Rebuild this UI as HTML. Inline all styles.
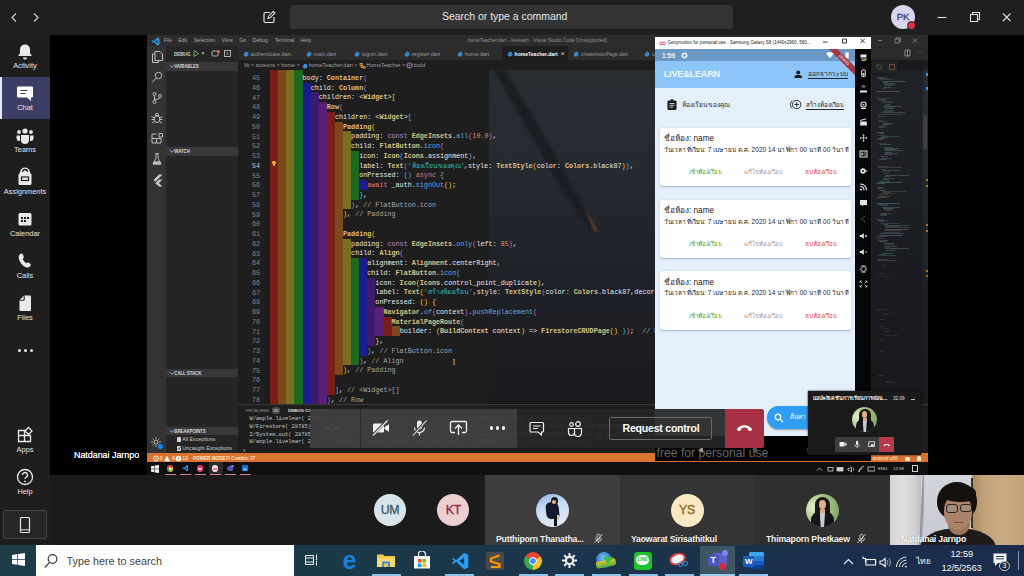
<!DOCTYPE html>
<html lang="th"><head><meta charset="utf-8"><title>Microsoft Teams</title><style>
*{margin:0;padding:0;box-sizing:border-box}
html,body{width:1024px;height:576px;overflow:hidden;background:#000}
body{font-family:"Liberation Sans","Noto Sans CJK JP",sans-serif;position:relative;color:#fff}
div,svg,span.a{position:absolute}
.m{font-family:"Liberation Mono","DejaVu Sans Mono",monospace}
.b{font-weight:bold}
.t{display:inline-block;white-space:nowrap;clip-path:inset(-6px 0 -6px 0)}
</style></head><body>
<div style="left:0px;top:0px;width:1024px;height:35px;background:#1f1f1f;"></div>
<div style="left:290px;top:5px;width:443px;height:24px;background:#333333;border-radius:3px;"></div>
<div style="left:442px;top:12.2px;font-size:10.45px;color:#e6e6e6;white-space:nowrap;line-height:1;">Search or type a command</div>
<svg style="left:8px;top:11px" width="36" height="14" viewBox="0 0 36 14"><path d="M8 2.500 L4 6.500 L8 10.500 M26 2.500 L30 6.500 L26 10.500" fill="none" stroke="#d0d0d0" stroke-width="1.2"/></svg>
<svg style="left:262px;top:10px" width="14" height="14" viewBox="0 0 14 14"><path d="M8 2.5H3.5a1.5 1.5 0 0 0-1.5 1.5v7a1.5 1.5 0 0 0 1.5 1.5h7a1.5 1.5 0 0 0 1.5-1.5V7" fill="none" stroke="#e0e0e0" stroke-width="1.2"/><path d="M6 8.5 L6.6 6.2 L11.4 1.4 L13 3 L8.2 7.8 Z" fill="none" stroke="#e0e0e0" stroke-width="1.1"/></svg>
<div style="left:891px;top:5px;width:24px;height:24px;background:#d9d5ef;border-radius:50%;"></div>
<div style="left:896.8px;top:12.3px;font-size:9.6px;color:#3b3a6e;white-space:nowrap;line-height:1;letter-spacing:-0.1px;-webkit-text-stroke:.3px #3b3a6e">PK</div>
<div style="left:906.5px;top:20.5px;width:9px;height:9px;background:#d8354a;border-radius:50%;border:1px solid #1f1f1f;"></div>
<svg style="left:930px;top:8px" width="90" height="20" viewBox="0 0 90 20" fill="none" stroke="#ddd" stroke-width="1.100"><path d="M7.500 9.500h9"/><path d="M40.500 6.500h7v7h-7zM42.500 6.500v-2h7v7h-2"/><path d="M73 5.500l7.500 7.500M80.500 5.500 73 13"/></svg>
<div style="left:0px;top:35px;width:50px;height:511px;background:#1f1e1e;"></div>
<div style="left:0px;top:77px;width:50px;height:42px;background:#3d3e66;"></div>
<div style="left:0px;top:77px;width:2px;height:42px;background:#e8e8f8;"></div>
<svg style="left:15px;top:41.2px" width="20" height="20" viewBox="0 0 20 20"><g transform="translate(0,1)"><path d="M10 2.5c-3 0-5 2.2-5 5v3.5l-1.8 3h13.6l-1.800-3V7.500c0-2.800-2-5-5-5z" fill="#e9e9e9"/><path d="M8 15.500a2 2 0 0 0 4 0z" fill="#e9e9e9"/></g></svg>
<div style="left:0;top:62.2px;width:50px;text-align:center;font-size:7.4px;color:#e4e4e4;line-height:1">Activity</div>
<svg style="left:15px;top:83.2px" width="20" height="20" viewBox="0 0 20 20"><path d="M3 3.500h14a1 1 0 0 1 1 1v9a1 1 0 0 1-1 1h-1v3.500l-4-3.500H3a1 1 0 0 1-1-1v-9a1 1 0 0 1 1-1z" fill="#fff"/><path d="M5.500 7.500h7M5.500 10.500h5" stroke="#3d3e66" stroke-width="1.2"/></svg>
<div style="left:0;top:104.2px;width:50px;text-align:center;font-size:7.4px;color:#e4e4e4;line-height:1">Chat</div>
<svg style="left:15px;top:125.2px" width="20" height="20" viewBox="0 0 20 20"><circle cx="10" cy="6" r="2.600" fill="#e9e9e9"/><circle cx="4" cy="7" r="1.900" fill="#e9e9e9"/><circle cx="16" cy="7" r="1.900" fill="#e9e9e9"/><path d="M6 10h8v5a4 4 0 0 1-8 0z" fill="#e9e9e9"/><path d="M1.500 10.500h3.500v5.500a3 3 0 0 1-3.500-2.500zM18.500 10.500h-3.500v5.500a3 3 0 0 0 3.500-2.500z" fill="#e9e9e9"/></svg>
<div style="left:0;top:146.2px;width:50px;text-align:center;font-size:7.4px;color:#e4e4e4;line-height:1">Teams</div>
<svg style="left:15px;top:167.2px" width="20" height="20" viewBox="0 0 20 20"><path d="M5 5.500a5 5 0 0 1 10 0l1.500 2v9a1.500 1.500 0 0 1-1.500 1.500H5a1.500 1.500 0 0 1-1.500-1.500v-9z" fill="#e9e9e9"/><path d="M7.500 5a2.500 2.500 0 0 1 5 0" stroke="#1f1e1e" fill="none" stroke-width="1.300"/><rect x="6.500" y="10" width="7" height="3.500" fill="none" stroke="#1f1e1e" stroke-width="1.200"/></svg>
<div style="left:0;top:188.2px;width:50px;text-align:center;font-size:7.4px;color:#e4e4e4;line-height:1">Assignments</div>
<svg style="left:15px;top:209.2px" width="20" height="20" viewBox="0 0 20 20"><rect x="3.500" y="4" width="13" height="12.500" rx="1.500" fill="#e9e9e9"/><path d="M6 8h2v2H6zM9 8h2v2H9zM12 8h2v2h-2zM6 11h2v2H6zM9 11h2v2H9z" fill="#1f1e1e"/></svg>
<div style="left:0;top:230.2px;width:50px;text-align:center;font-size:7.4px;color:#e4e4e4;line-height:1">Calendar</div>
<svg style="left:15px;top:251.2px" width="20" height="20" viewBox="0 0 20 20"><path d="M6.500 2.500c1 0 1.500 1 2 2.500s.2 2-.8 2.800c.5 1.500 2 3.500 3.500 4.500 1-.8 1.800-1 3-.2s2 1.500 1.500 2.500-2 2.400-4 1.900c-4-1-7.700-6-8-10-.2-2 1.300-4 2.800-4z" fill="#e9e9e9"/></svg>
<div style="left:0;top:272.2px;width:50px;text-align:center;font-size:7.4px;color:#e4e4e4;line-height:1">Calls</div>
<svg style="left:15px;top:293.2px" width="20" height="20" viewBox="0 0 20 20"><g transform="translate(20,0) scale(-1,1)"><path d="M5 2.500h6l4.500 4.500v10a1 1 0 0 1-1 1h-9.500a1 1 0 0 1-1-1v-13.500a1 1 0 0 1 1-1z" fill="#e9e9e9"/><path d="M10.800 2.500v4.700h4.700" fill="none" stroke="#1f1e1e" stroke-width="1"/></g></svg>
<div style="left:0;top:314.2px;width:50px;text-align:center;font-size:7.4px;color:#e4e4e4;line-height:1">Files</div>
<div style="left:17.5px;top:348.8px;width:3.2px;height:3.2px;background:#e6e6e6;border-radius:50%;"></div>
<div style="left:23.5px;top:348.8px;width:3.2px;height:3.2px;background:#e6e6e6;border-radius:50%;"></div>
<div style="left:29.5px;top:348.8px;width:3.2px;height:3.2px;background:#e6e6e6;border-radius:50%;"></div>
<svg style="left:15px;top:425.2px" width="20" height="20" viewBox="0 0 20 20"><path d="M3.500 5.500h6v11h-6zM9.500 10.500h6v6h-6M3.500 10.500h6" fill="none" stroke="#e9e9e9" stroke-width="1.300"/><path d="M13.500 2.500l3.500 3.500-3.500 3.500-3.500-3.500z" fill="none" stroke="#e9e9e9" stroke-width="1.300"/></svg>
<div style="left:0;top:446.2px;width:50px;text-align:center;font-size:7.4px;color:#e4e4e4;line-height:1">Apps</div>
<svg style="left:15px;top:467.2px" width="20" height="20" viewBox="0 0 20 20"><circle cx="10" cy="10" r="7.500" fill="none" stroke="#e9e9e9" stroke-width="1.300"/><path d="M7.500 8a2.500 2.500 0 1 1 3.500 2.300c-.7.400-1 .8-1 1.700" fill="none" stroke="#e9e9e9" stroke-width="1.300"/><circle cx="10" cy="14.300" r=".9" fill="#e9e9e9"/></svg>
<div style="left:0;top:488.2px;width:50px;text-align:center;font-size:7.4px;color:#e4e4e4;line-height:1">Help</div>
<div style="left:2.5px;top:509.5px;width:44.5px;height:29.5px;background:#262626;border:1px solid #444;border-radius:2px;"></div>
<svg style="left:19px;top:516px" width="12" height="18" viewBox="0 0 12 18"><rect x="1.500" y="1.500" width="9" height="15" rx="1" fill="none" stroke="#e6e6e6" stroke-width="1.200"/><path d="M1.500 13.800h9" stroke="#e6e6e6" stroke-width="1"/></svg>
<div style="left:74px;top:451.3px;font-size:8.9px;color:#f4f4f4;white-space:nowrap;line-height:1;text-shadow:0 0 .4px #fff;">Natdanai Jarnpo</div>
<div style="left:147px;top:35px;width:781px;height:440px;background:#1e1e1e;"></div>
<div style="left:488.6px;top:70px;width:439.4px;height:334px;background:linear-gradient(to bottom,#272d31 0%,#242a30 30%,#1f242b 55%,#1c1e23 80%,#1b1b1f 100%);"></div>
<svg style="left:488px;top:70px" width="170" height="200" viewBox="0 0 170 200"><defs><filter id="bl"><feGaussianBlur stdDeviation="1.1"/></filter></defs><path d="M6 0 L17 0 L60 72 L84 116 L108 160 L103 163 L72 116 L48 74 Z" fill="#1a1e22" filter="url(#bl)" opacity=".9"/><path d="M97 138 L110 161 L106 162 Z" fill="#a0522a" filter="url(#bl)" opacity=".55"/></svg>
<div style="left:147px;top:35px;width:781px;height:11px;background:#2c2c2d;"></div>
<svg style="left:151px;top:36.500px" width="9" height="9" viewBox="0 0 24 24"><path d="M17.500 1.500 7 11 3 8 1.500 9l3.500 3-3.500 3L3 16l4-3 10.500 9.500 5-2.500V4zM17.500 7v10L11 12z" fill="#2a9df4"/></svg>
<div style="left:163.8px;top:38.3px;font-size:5.2px;color:#a8a8a8;white-space:nowrap;line-height:1;">File</div>
<div style="left:178.3px;top:38.3px;font-size:5.2px;color:#a8a8a8;white-space:nowrap;line-height:1;">Edit</div>
<div style="left:193.9px;top:38.3px;font-size:5.2px;color:#a8a8a8;white-space:nowrap;line-height:1;">Selection</div>
<div style="left:221.5px;top:38.3px;font-size:5.2px;color:#a8a8a8;white-space:nowrap;line-height:1;">View</div>
<div style="left:239.2px;top:38.3px;font-size:5.2px;color:#a8a8a8;white-space:nowrap;line-height:1;">Go</div>
<div style="left:252.5px;top:38.3px;font-size:5.2px;color:#a8a8a8;white-space:nowrap;line-height:1;">Debug</div>
<div style="left:274.7px;top:38.3px;font-size:5.2px;color:#a8a8a8;white-space:nowrap;line-height:1;">Terminal</div>
<div style="left:300.5px;top:38.3px;font-size:5.2px;color:#a8a8a8;white-space:nowrap;line-height:1;">Help</div>
<div style="left:467.5px;top:39px;font-size:4.88px;color:#949494;white-space:nowrap;line-height:1;">homeTeacher.dart - livelearn - Visual Studio Code [Unsupported]</div>
<div style="left:147px;top:46px;width:19px;height:407px;background:#333333;"></div>
<svg style="left:150px;top:49.5px" width="14" height="14" viewBox="0 0 14 14" fill="none" stroke="#bdbdbd" stroke-width="1"><path d="M5 1.500h5l2.500 2.500v6.500H5zM5 4H2.500v8.500h6V10.500"/></svg>
<svg style="left:150px;top:70px" width="14" height="14" viewBox="0 0 14 14" fill="none" stroke="#bdbdbd" stroke-width="1"><circle cx="8.500" cy="5.500" r="3.200"/><path d="M6.300 8 2 12.500"/></svg>
<svg style="left:150px;top:90.5px" width="14" height="14" viewBox="0 0 14 14" fill="none" stroke="#bdbdbd" stroke-width="1"><circle cx="4.500" cy="3" r="1.500"/><circle cx="4.500" cy="11" r="1.500"/><circle cx="10" cy="5" r="1.500"/><path d="M4.500 4.500v5M10 6.500c0 2-5.500 1.500-5.500 3"/></svg>
<svg style="left:150px;top:111px" width="14" height="14" viewBox="0 0 14 14" fill="none" stroke="#bdbdbd" stroke-width="1"><ellipse cx="7" cy="8" rx="2.800" ry="3.600"/><circle cx="7" cy="3.800" r="1.500"/><path d="M1.500 5.500l2.800 1.500M12.500 5.500 9.700 7M1.500 8.500h2.700M12.500 8.500H9.800M2 12l2.500-1.500M12 12l-2.500-1.500"/></svg>
<svg style="left:150px;top:131.5px" width="14" height="14" viewBox="0 0 14 14" fill="none" stroke="#bdbdbd" stroke-width="1"><path d="M2 6.500h4.500V11M2 6.500V11h9V6.500H6.500M6.500 2H2v4.500M9 1.500h3.500V5H9z"/></svg>
<svg style="left:150px;top:152px" width="14" height="14" viewBox="0 0 14 14" fill="none" stroke="#bdbdbd" stroke-width="1"><path d="M5.500 1.500h3M6 1.500V6L3 12h8L8 6V1.500M4 10h6" /><path d="M4 10h6l1 2H3z" fill="#bdbdbd"/></svg>
<svg style="left:150px;top:173px" width="14" height="14" viewBox="0 0 14 14"><path d="M9 1.500 3.500 7 5.300 8.800 12.500 1.500zM9 6.500 5.300 10.200 9 13.500h3.500L8.800 10l3.700-3.500z" fill="#c8c8c8"/></svg>
<svg style="left:150px;top:436px" width="14" height="14" viewBox="0 0 14 14" fill="none" stroke="#bdbdbd" stroke-width="1"><circle cx="6" cy="6" r="2"/><path d="M6 1.200v1.600M6 9.200v1.600M1.200 6h1.600M9.200 6h1.600M2.600 2.600l1.100 1.100M8.300 8.300l1.100 1.100M2.600 9.400l1.100-1.100M8.300 3.700l1.100-1.100"/></svg>
<div style="left:157.5px;top:443.5px;width:5.5px;height:5.5px;background:#1583e8;border-radius:50%;"></div>
<div style="left:166px;top:46px;width:72px;height:407px;background:#252526;"></div>
<div style="left:174px;top:52.8px;font-size:4.7px;color:#cfcfcf;white-space:nowrap;line-height:1;font-weight:bold;letter-spacing:-.1px">DEBUG</div>
<svg style="left:192px;top:49px" width="44" height="9" viewBox="0 0 44 9"><path d="M2 1.500v6l4.500-3z" fill="none" stroke="#5fb760" stroke-width="1"/><path d="M9.500 3.500h3l-1.500 2z" fill="#ddd"/><rect x="20" y="2" width="6" height="5" rx="1" fill="none" stroke="#bbb" stroke-width=".9"/><circle cx="26.500" cy="2.500" r="1.500" fill="#e8703a"/><rect x="32.500" y="1.500" width="6" height="6" fill="none" stroke="#bbb" stroke-width=".9"/><path d="M34.500 3l1.500 1.500-1.500 1.500" fill="none" stroke="#bbb" stroke-width=".8"/></svg>
<div style="left:166px;top:62px;width:72px;height:8.5px;background:#38383a;"></div>
<svg style="left:168.500px;top:64px" width="6" height="5" viewBox="0 0 6 5"><path d="M1 1.200l2 2.200 2-2.200" fill="none" stroke="#c0c0c0" stroke-width=".8"/></svg>
<div style="left:174.3px;top:65.3px;font-size:4.45px;color:#d8d8d8;white-space:nowrap;line-height:1;font-weight:bold;letter-spacing:-.1px">VARIABLES</div>
<div style="left:166px;top:147px;width:72px;height:8.8px;background:#38383a;"></div>
<svg style="left:168.500px;top:149px" width="6" height="5" viewBox="0 0 6 5"><path d="M1 1.200l2 2.200 2-2.200" fill="none" stroke="#c0c0c0" stroke-width=".8"/></svg>
<div style="left:174.3px;top:150.3px;font-size:4.45px;color:#d8d8d8;white-space:nowrap;line-height:1;font-weight:bold;letter-spacing:-.1px">WATCH</div>
<div style="left:166px;top:368.5px;width:72px;height:8.5px;background:#38383a;"></div>
<svg style="left:168.500px;top:370.5px" width="6" height="5" viewBox="0 0 6 5"><path d="M1 1.200l2 2.200 2-2.200" fill="none" stroke="#c0c0c0" stroke-width=".8"/></svg>
<div style="left:174.3px;top:371.8px;font-size:4.45px;color:#d8d8d8;white-space:nowrap;line-height:1;font-weight:bold;letter-spacing:-.1px">CALL STACK</div>
<div style="left:166px;top:426.7px;width:72px;height:8.5px;background:#38383a;"></div>
<svg style="left:168.500px;top:428.7px" width="6" height="5" viewBox="0 0 6 5"><path d="M1 1.200l2 2.200 2-2.200" fill="none" stroke="#c0c0c0" stroke-width=".8"/></svg>
<div style="left:174.3px;top:430.0px;font-size:4.45px;color:#d8d8d8;white-space:nowrap;line-height:1;font-weight:bold;letter-spacing:-.1px">BREAKPOINTS</div>
<div style="left:176.5px;top:437px;width:4.5px;height:4.5px;background:#d0d0d0;border-radius:.5px;"></div>
<div style="left:182.3px;top:437px;font-size:5.25px;color:#cccccc;white-space:nowrap;line-height:1;">All Exceptions</div>
<div style="left:176.5px;top:446px;width:4.5px;height:4.5px;background:#d0d0d0;border-radius:.5px;"></div>
<svg style="left:176.500px;top:446px" width="4.500" height="4.500" viewBox="0 0 9 9"><path d="M1.500 4.500 3.800 7 7.500 2" fill="none" stroke="#222" stroke-width="1.600"/></svg>
<div style="left:182.3px;top:446px;font-size:5.25px;color:#cccccc;white-space:nowrap;line-height:1;">Uncaught Exceptions</div>
<div style="left:238px;top:46px;width:690px;height:14px;background:#2a2a2b;"></div>
<div style="left:238px;top:46px;width:62.5px;height:14px;background:#2b2b2c;"></div>
<svg style="left:242.8px;top:50.6px" width="6" height="6" viewBox="0 0 6 6"><path d="M.6 3.600 2.200 1.200 3.800.500 5.500 2.800 5.200 4.500 3.600 5.600H1.600z" fill="#3d94d6"/><path d="M2.600 2.200 4.600 4.400" stroke="#1e3a52" stroke-width=".6"/></svg>
<div style="left:250.6px;top:51.6px;font-size:5.4px;color:#9a9a9a;white-space:nowrap;line-height:1;">authenticate.dart</div>
<div style="left:301px;top:46px;width:48.0px;height:14px;background:#2b2b2c;"></div>
<svg style="left:305.8px;top:50.6px" width="6" height="6" viewBox="0 0 6 6"><path d="M.6 3.600 2.200 1.200 3.800.500 5.500 2.800 5.200 4.500 3.600 5.600H1.600z" fill="#3d94d6"/><path d="M2.600 2.200 4.600 4.400" stroke="#1e3a52" stroke-width=".6"/></svg>
<div style="left:313.6px;top:51.6px;font-size:5.4px;color:#9a9a9a;white-space:nowrap;line-height:1;">main.dart</div>
<div style="left:349.5px;top:46px;width:49.0px;height:14px;background:#2b2b2c;"></div>
<svg style="left:354.3px;top:50.6px" width="6" height="6" viewBox="0 0 6 6"><path d="M.6 3.600 2.200 1.200 3.800.500 5.500 2.800 5.200 4.500 3.600 5.600H1.600z" fill="#3d94d6"/><path d="M2.600 2.200 4.600 4.400" stroke="#1e3a52" stroke-width=".6"/></svg>
<div style="left:362.1px;top:51.6px;font-size:5.4px;color:#9a9a9a;white-space:nowrap;line-height:1;">signin.dart</div>
<div style="left:399px;top:46px;width:53.0px;height:14px;background:#2b2b2c;"></div>
<svg style="left:403.8px;top:50.6px" width="6" height="6" viewBox="0 0 6 6"><path d="M.6 3.600 2.200 1.200 3.800.500 5.500 2.800 5.200 4.500 3.600 5.600H1.600z" fill="#3d94d6"/><path d="M2.600 2.200 4.600 4.400" stroke="#1e3a52" stroke-width=".6"/></svg>
<div style="left:411.6px;top:51.6px;font-size:5.4px;color:#9a9a9a;white-space:nowrap;line-height:1;">register.dart</div>
<div style="left:452.5px;top:46px;width:49.0px;height:14px;background:#2b2b2c;"></div>
<svg style="left:457.3px;top:50.6px" width="6" height="6" viewBox="0 0 6 6"><path d="M.6 3.600 2.200 1.200 3.800.500 5.500 2.800 5.200 4.500 3.600 5.600H1.600z" fill="#3d94d6"/><path d="M2.600 2.200 4.600 4.400" stroke="#1e3a52" stroke-width=".6"/></svg>
<div style="left:465.1px;top:51.6px;font-size:5.4px;color:#9a9a9a;white-space:nowrap;line-height:1;">home.dart</div>
<div style="left:502px;top:46px;width:65.5px;height:14px;background:#1e1e1e;"></div>
<svg style="left:506.8px;top:50.6px" width="6" height="6" viewBox="0 0 6 6"><path d="M.6 3.600 2.200 1.200 3.800.500 5.500 2.800 5.200 4.500 3.600 5.600H1.600z" fill="#3d94d6"/><path d="M2.600 2.200 4.600 4.400" stroke="#1e3a52" stroke-width=".6"/></svg>
<div style="left:514.6px;top:51.6px;font-size:5.05px;color:#ffffff;white-space:nowrap;line-height:1;font-weight:bold;">homeTeacher.dart</div>
<div style="left:560.5px;top:49.8px;font-size:7.5px;color:#c8c8c8;white-space:nowrap;line-height:1;">×</div>
<div style="left:568.5px;top:46px;width:70.5px;height:14px;background:#2b2b2c;"></div>
<svg style="left:573.3px;top:50.6px" width="6" height="6" viewBox="0 0 6 6"><path d="M.6 3.600 2.200 1.200 3.800.500 5.500 2.800 5.200 4.500 3.600 5.600H1.600z" fill="#3d94d6"/><path d="M2.600 2.200 4.600 4.400" stroke="#1e3a52" stroke-width=".6"/></svg>
<div style="left:581.1px;top:51.6px;font-size:4.98px;color:#9a9a9a;white-space:nowrap;line-height:1;">createroomPage.dart</div>
<div style="left:639.5px;top:46px;width:59.5px;height:14px;background:#2b2b2c;"></div>
<svg style="left:644.3px;top:50.6px" width="6" height="6" viewBox="0 0 6 6"><path d="M.6 3.600 2.200 1.200 3.800.500 5.500 2.800 5.200 4.500 3.600 5.600H1.600z" fill="#3d94d6"/><path d="M2.600 2.200 4.600 4.400" stroke="#1e3a52" stroke-width=".6"/></svg>
<div style="left:652.1px;top:51.6px;font-size:5.4px;color:#9a9a9a;white-space:nowrap;line-height:1;">u</div>
<div style="left:238px;top:60px;width:417px;height:10px;background:#1e1e1e;"></div>
<div style="left:244px;top:62.5px;font-size:5.5px;color:#a0a0a0;white-space:nowrap;line-height:1;">lib &gt; screens &gt; home &gt;</div>
<svg style="left:301.500px;top:62.500px" width="6" height="6" viewBox="0 0 6 6"><path d="M.6 3.600 2.200 1.200 3.800.500 5.500 2.800 5.200 4.500 3.600 5.600H1.600z" fill="#3d94d6"/></svg>
<div style="left:308.8px;top:62.5px;font-size:5.5px;color:#a0a0a0;white-space:nowrap;line-height:1;">homeTeacher.dart &gt;</div>
<svg style="left:358.500px;top:62.300px" width="7" height="7" viewBox="0 0 7 7" fill="none" stroke="#e8a33a" stroke-width=".9"><path d="M1 1.500h2.500v1.800H1zM2.200 3.300v2.200h2M4.200 4.500h2v1.800h-2zM2.200 4h2"/></svg>
<div style="left:366.3px;top:62.5px;font-size:5.5px;color:#a0a0a0;white-space:nowrap;line-height:1;">HomeTeacher &gt;</div>
<svg style="left:405.800px;top:62.300px" width="7" height="7" viewBox="0 0 7 7" fill="none" stroke="#b180d7" stroke-width=".9"><path d="M3.500 .800 6 2.200v2.600L3.500 6.200 1 4.800V2.200z"/><path d="M1 2.200 3.500 3.600 6 2.200M3.500 3.600v2.600" stroke-width=".6"/></svg>
<div style="left:413.6px;top:62.5px;font-size:5.5px;color:#a0a0a0;white-space:nowrap;line-height:1;">build</div>
<div style="left:238px;top:70px;width:690px;height:334px;overflow:hidden"><div style="left:32.20px;top:2.75px;width:8.2px;height:9.85px;background:#7a1e1c"></div><div style="left:40.29px;top:2.75px;width:8.2px;height:9.85px;background:#7c481c"></div><div style="left:48.38px;top:2.75px;width:8.2px;height:9.85px;background:#787020"></div><div style="left:56.47px;top:2.75px;width:8.2px;height:9.85px;background:#1b6a1e"></div><div class="m" style="left:14px;top:5.15px;font-size:6.77px;line-height:1;color:#858585">45</div><div class="m" style="left:64.56px;top:4.95px;font-size:6.742px;line-height:1;white-space:pre;"><span style="color:#e8e8e8">body: </span><span style="color:#dcc184;font-weight:bold">Container</span><span style="color:#da70d6">(</span></div><div style="left:32.20px;top:12.50px;width:8.2px;height:9.85px;background:#7a1e1c"></div><div style="left:40.29px;top:12.50px;width:8.2px;height:9.85px;background:#7c481c"></div><div style="left:48.38px;top:12.50px;width:8.2px;height:9.85px;background:#787020"></div><div style="left:56.47px;top:12.50px;width:8.2px;height:9.85px;background:#1b6a1e"></div><div style="left:64.56px;top:12.50px;width:8.2px;height:9.85px;background:#1c1c8e"></div><div class="m" style="left:14px;top:14.90px;font-size:6.77px;line-height:1;color:#858585">46</div><div class="m" style="left:72.65px;top:14.70px;font-size:6.742px;line-height:1;white-space:pre;"><span style="color:#e8e8e8">child: </span><span style="color:#dcc184;font-weight:bold">Column</span><span style="color:#4fb4f0">(</span></div><div style="left:32.20px;top:22.25px;width:8.2px;height:9.85px;background:#7a1e1c"></div><div style="left:40.29px;top:22.25px;width:8.2px;height:9.85px;background:#7c481c"></div><div style="left:48.38px;top:22.25px;width:8.2px;height:9.85px;background:#787020"></div><div style="left:56.47px;top:22.25px;width:8.2px;height:9.85px;background:#1b6a1e"></div><div style="left:64.56px;top:22.25px;width:8.2px;height:9.85px;background:#1c1c8e"></div><div style="left:72.65px;top:22.25px;width:8.2px;height:9.85px;background:#3c1c6a"></div><div class="m" style="left:14px;top:24.65px;font-size:6.77px;line-height:1;color:#858585">47</div><div class="m" style="left:80.74px;top:24.45px;font-size:6.742px;line-height:1;white-space:pre;"><span style="color:#e8e8e8">children: &lt;</span><span style="color:#dcc184;font-weight:bold">Widget</span><span style="color:#e8e8e8">&gt;</span><span style="color:#ffd700">[</span></div><div style="left:32.20px;top:32.00px;width:8.2px;height:9.85px;background:#7a1e1c"></div><div style="left:40.29px;top:32.00px;width:8.2px;height:9.85px;background:#7c481c"></div><div style="left:48.38px;top:32.00px;width:8.2px;height:9.85px;background:#787020"></div><div style="left:56.47px;top:32.00px;width:8.2px;height:9.85px;background:#1b6a1e"></div><div style="left:64.56px;top:32.00px;width:8.2px;height:9.85px;background:#1c1c8e"></div><div style="left:72.65px;top:32.00px;width:8.2px;height:9.85px;background:#3c1c6a"></div><div style="left:80.74px;top:32.00px;width:8.2px;height:9.85px;background:#5a2078"></div><div class="m" style="left:14px;top:34.40px;font-size:6.77px;line-height:1;color:#858585">48</div><div class="m" style="left:88.83px;top:34.20px;font-size:6.742px;line-height:1;white-space:pre;"><span style="color:#dcc184;font-weight:bold">Row</span><span style="color:#da70d6">(</span></div><div style="left:32.20px;top:41.75px;width:8.2px;height:9.85px;background:#7a1e1c"></div><div style="left:40.29px;top:41.75px;width:8.2px;height:9.85px;background:#7c481c"></div><div style="left:48.38px;top:41.75px;width:8.2px;height:9.85px;background:#787020"></div><div style="left:56.47px;top:41.75px;width:8.2px;height:9.85px;background:#1b6a1e"></div><div style="left:64.56px;top:41.75px;width:8.2px;height:9.85px;background:#1c1c8e"></div><div style="left:72.65px;top:41.75px;width:8.2px;height:9.85px;background:#3c1c6a"></div><div style="left:80.74px;top:41.75px;width:8.2px;height:9.85px;background:#5a2078"></div><div style="left:88.83px;top:41.75px;width:8.2px;height:9.85px;background:#7a1e1c"></div><div class="m" style="left:14px;top:44.15px;font-size:6.77px;line-height:1;color:#858585">49</div><div class="m" style="left:96.92px;top:43.95px;font-size:6.742px;line-height:1;white-space:pre;"><span style="color:#e8e8e8">children: &lt;</span><span style="color:#dcc184;font-weight:bold">Widget</span><span style="color:#e8e8e8">&gt;</span><span style="color:#4fb4f0">[</span></div><div style="left:32.20px;top:51.50px;width:8.2px;height:9.85px;background:#7a1e1c"></div><div style="left:40.29px;top:51.50px;width:8.2px;height:9.85px;background:#7c481c"></div><div style="left:48.38px;top:51.50px;width:8.2px;height:9.85px;background:#787020"></div><div style="left:56.47px;top:51.50px;width:8.2px;height:9.85px;background:#1b6a1e"></div><div style="left:64.56px;top:51.50px;width:8.2px;height:9.85px;background:#1c1c8e"></div><div style="left:72.65px;top:51.50px;width:8.2px;height:9.85px;background:#3c1c6a"></div><div style="left:80.74px;top:51.50px;width:8.2px;height:9.85px;background:#5a2078"></div><div style="left:88.83px;top:51.50px;width:8.2px;height:9.85px;background:#7a1e1c"></div><div style="left:96.92px;top:51.50px;width:8.2px;height:9.85px;background:#7c481c"></div><div class="m" style="left:14px;top:53.90px;font-size:6.77px;line-height:1;color:#858585">50</div><div class="m" style="left:105.01px;top:53.70px;font-size:6.742px;line-height:1;white-space:pre;"><span style="color:#dcc184;font-weight:bold">Padding</span><span style="color:#ffd700">(</span></div><div style="left:32.20px;top:61.25px;width:8.2px;height:9.85px;background:#7a1e1c"></div><div style="left:40.29px;top:61.25px;width:8.2px;height:9.85px;background:#7c481c"></div><div style="left:48.38px;top:61.25px;width:8.2px;height:9.85px;background:#787020"></div><div style="left:56.47px;top:61.25px;width:8.2px;height:9.85px;background:#1b6a1e"></div><div style="left:64.56px;top:61.25px;width:8.2px;height:9.85px;background:#1c1c8e"></div><div style="left:72.65px;top:61.25px;width:8.2px;height:9.85px;background:#3c1c6a"></div><div style="left:80.74px;top:61.25px;width:8.2px;height:9.85px;background:#5a2078"></div><div style="left:88.83px;top:61.25px;width:8.2px;height:9.85px;background:#7a1e1c"></div><div style="left:96.92px;top:61.25px;width:8.2px;height:9.85px;background:#7c481c"></div><div style="left:105.01px;top:61.25px;width:8.2px;height:9.85px;background:#787020"></div><div class="m" style="left:14px;top:63.65px;font-size:6.77px;line-height:1;color:#858585">51</div><div class="m" style="left:113.10px;top:63.45px;font-size:6.742px;line-height:1;white-space:pre;"><span style="color:#e8e8e8">padding: </span><span style="color:#c586c0">const </span><span style="color:#dcc184;font-weight:bold">EdgeInsets</span><span style="color:#e8e8e8">.</span><span style="color:#5aa8e6">all</span><span style="color:#da70d6">(</span><span style="color:#d19a66">10.0</span><span style="color:#da70d6">)</span><span style="color:#e8e8e8">,</span></div><div style="left:32.20px;top:71.00px;width:8.2px;height:9.85px;background:#7a1e1c"></div><div style="left:40.29px;top:71.00px;width:8.2px;height:9.85px;background:#7c481c"></div><div style="left:48.38px;top:71.00px;width:8.2px;height:9.85px;background:#787020"></div><div style="left:56.47px;top:71.00px;width:8.2px;height:9.85px;background:#1b6a1e"></div><div style="left:64.56px;top:71.00px;width:8.2px;height:9.85px;background:#1c1c8e"></div><div style="left:72.65px;top:71.00px;width:8.2px;height:9.85px;background:#3c1c6a"></div><div style="left:80.74px;top:71.00px;width:8.2px;height:9.85px;background:#5a2078"></div><div style="left:88.83px;top:71.00px;width:8.2px;height:9.85px;background:#7a1e1c"></div><div style="left:96.92px;top:71.00px;width:8.2px;height:9.85px;background:#7c481c"></div><div style="left:105.01px;top:71.00px;width:8.2px;height:9.85px;background:#787020"></div><div class="m" style="left:14px;top:73.40px;font-size:6.77px;line-height:1;color:#858585">52</div><div class="m" style="left:113.10px;top:73.20px;font-size:6.742px;line-height:1;white-space:pre;"><span style="color:#e8e8e8">child: </span><span style="color:#dcc184;font-weight:bold">FlatButton</span><span style="color:#e8e8e8">.</span><span style="color:#5aa8e6">icon</span><span style="color:#da70d6">(</span></div><div style="left:32.20px;top:80.75px;width:8.2px;height:9.85px;background:#7a1e1c"></div><div style="left:40.29px;top:80.75px;width:8.2px;height:9.85px;background:#7c481c"></div><div style="left:48.38px;top:80.75px;width:8.2px;height:9.85px;background:#787020"></div><div style="left:56.47px;top:80.75px;width:8.2px;height:9.85px;background:#1b6a1e"></div><div style="left:64.56px;top:80.75px;width:8.2px;height:9.85px;background:#1c1c8e"></div><div style="left:72.65px;top:80.75px;width:8.2px;height:9.85px;background:#3c1c6a"></div><div style="left:80.74px;top:80.75px;width:8.2px;height:9.85px;background:#5a2078"></div><div style="left:88.83px;top:80.75px;width:8.2px;height:9.85px;background:#7a1e1c"></div><div style="left:96.92px;top:80.75px;width:8.2px;height:9.85px;background:#7c481c"></div><div style="left:105.01px;top:80.75px;width:8.2px;height:9.85px;background:#787020"></div><div style="left:113.10px;top:80.75px;width:8.2px;height:9.85px;background:#1b6a1e"></div><div class="m" style="left:14px;top:83.15px;font-size:6.77px;line-height:1;color:#858585">53</div><div class="m" style="left:121.19px;top:82.95px;font-size:6.742px;line-height:1;white-space:pre;"><span style="color:#e8e8e8">icon: </span><span style="color:#dcc184;font-weight:bold">Icon</span><span style="color:#4fb4f0">(</span><span style="color:#dcc184;font-weight:bold">Icons</span><span style="color:#e8e8e8">.assignment</span><span style="color:#4fb4f0">)</span><span style="color:#e8e8e8">,</span></div><div style="left:32.20px;top:90.50px;width:8.2px;height:9.85px;background:#7a1e1c"></div><div style="left:40.29px;top:90.50px;width:8.2px;height:9.85px;background:#7c481c"></div><div style="left:48.38px;top:90.50px;width:8.2px;height:9.85px;background:#787020"></div><div style="left:56.47px;top:90.50px;width:8.2px;height:9.85px;background:#1b6a1e"></div><div style="left:64.56px;top:90.50px;width:8.2px;height:9.85px;background:#1c1c8e"></div><div style="left:72.65px;top:90.50px;width:8.2px;height:9.85px;background:#3c1c6a"></div><div style="left:80.74px;top:90.50px;width:8.2px;height:9.85px;background:#5a2078"></div><div style="left:88.83px;top:90.50px;width:8.2px;height:9.85px;background:#7a1e1c"></div><div style="left:96.92px;top:90.50px;width:8.2px;height:9.85px;background:#7c481c"></div><div style="left:105.01px;top:90.50px;width:8.2px;height:9.85px;background:#787020"></div><div style="left:113.10px;top:90.50px;width:8.2px;height:9.85px;background:#1b6a1e"></div><div class="m" style="left:14px;top:92.90px;font-size:6.77px;line-height:1;color:#c6c6c6">54</div><div class="m" style="left:121.19px;top:92.70px;font-size:6.742px;line-height:1;white-space:pre;"><span style="color:#e8e8e8">label: </span><span style="color:#dcc184;font-weight:bold">Text</span><span style="color:#4fb4f0">(</span><span class="t" style="color:#2bbcb4;width:56.2px">&#x27;ห้องเรียนของคุณ&#x27;</span><span style="color:#e8e8e8">,style: </span><span style="color:#dcc184;font-weight:bold">TextStyle</span><span style="color:#ffd700">(</span><span style="color:#e8e8e8">color: </span><span style="color:#dcc184;font-weight:bold">Colors</span><span style="color:#e8e8e8">.black87</span><span style="color:#ffd700">)</span><span style="color:#4fb4f0">)</span><span style="color:#e8e8e8">,</span></div><div style="left:32.20px;top:100.25px;width:8.2px;height:9.85px;background:#7a1e1c"></div><div style="left:40.29px;top:100.25px;width:8.2px;height:9.85px;background:#7c481c"></div><div style="left:48.38px;top:100.25px;width:8.2px;height:9.85px;background:#787020"></div><div style="left:56.47px;top:100.25px;width:8.2px;height:9.85px;background:#1b6a1e"></div><div style="left:64.56px;top:100.25px;width:8.2px;height:9.85px;background:#1c1c8e"></div><div style="left:72.65px;top:100.25px;width:8.2px;height:9.85px;background:#3c1c6a"></div><div style="left:80.74px;top:100.25px;width:8.2px;height:9.85px;background:#5a2078"></div><div style="left:88.83px;top:100.25px;width:8.2px;height:9.85px;background:#7a1e1c"></div><div style="left:96.92px;top:100.25px;width:8.2px;height:9.85px;background:#7c481c"></div><div style="left:105.01px;top:100.25px;width:8.2px;height:9.85px;background:#787020"></div><div style="left:113.10px;top:100.25px;width:8.2px;height:9.85px;background:#1b6a1e"></div><div class="m" style="left:14px;top:102.65px;font-size:6.77px;line-height:1;color:#858585">55</div><div class="m" style="left:121.19px;top:102.45px;font-size:6.742px;line-height:1;white-space:pre;"><span style="color:#e8e8e8">onPressed: </span><span style="color:#4fb4f0">() </span><span style="color:#e0787a">async </span><span style="color:#4fb4f0">{</span></div><div style="left:32.20px;top:110.00px;width:8.2px;height:9.85px;background:#7a1e1c"></div><div style="left:40.29px;top:110.00px;width:8.2px;height:9.85px;background:#7c481c"></div><div style="left:48.38px;top:110.00px;width:8.2px;height:9.85px;background:#787020"></div><div style="left:56.47px;top:110.00px;width:8.2px;height:9.85px;background:#1b6a1e"></div><div style="left:64.56px;top:110.00px;width:8.2px;height:9.85px;background:#1c1c8e"></div><div style="left:72.65px;top:110.00px;width:8.2px;height:9.85px;background:#3c1c6a"></div><div style="left:80.74px;top:110.00px;width:8.2px;height:9.85px;background:#5a2078"></div><div style="left:88.83px;top:110.00px;width:8.2px;height:9.85px;background:#7a1e1c"></div><div style="left:96.92px;top:110.00px;width:8.2px;height:9.85px;background:#7c481c"></div><div style="left:105.01px;top:110.00px;width:8.2px;height:9.85px;background:#787020"></div><div style="left:113.10px;top:110.00px;width:8.2px;height:9.85px;background:#1b6a1e"></div><div style="left:121.19px;top:110.00px;width:8.2px;height:9.85px;background:#1c1c8e"></div><div class="m" style="left:14px;top:112.40px;font-size:6.77px;line-height:1;color:#858585">56</div><div class="m" style="left:129.28px;top:112.20px;font-size:6.742px;line-height:1;white-space:pre;"><span style="color:#e0787a">await </span><span style="color:#e8e8e8">_auth.</span><span style="color:#5aa8e6">signOut</span><span style="color:#ffd700">()</span><span style="color:#e8e8e8">;</span></div><div style="left:32.20px;top:119.75px;width:8.2px;height:9.85px;background:#7a1e1c"></div><div style="left:40.29px;top:119.75px;width:8.2px;height:9.85px;background:#7c481c"></div><div style="left:48.38px;top:119.75px;width:8.2px;height:9.85px;background:#787020"></div><div style="left:56.47px;top:119.75px;width:8.2px;height:9.85px;background:#1b6a1e"></div><div style="left:64.56px;top:119.75px;width:8.2px;height:9.85px;background:#1c1c8e"></div><div style="left:72.65px;top:119.75px;width:8.2px;height:9.85px;background:#3c1c6a"></div><div style="left:80.74px;top:119.75px;width:8.2px;height:9.85px;background:#5a2078"></div><div style="left:88.83px;top:119.75px;width:8.2px;height:9.85px;background:#7a1e1c"></div><div style="left:96.92px;top:119.75px;width:8.2px;height:9.85px;background:#7c481c"></div><div style="left:105.01px;top:119.75px;width:8.2px;height:9.85px;background:#787020"></div><div style="left:113.10px;top:119.75px;width:8.2px;height:9.85px;background:#1b6a1e"></div><div class="m" style="left:14px;top:122.15px;font-size:6.77px;line-height:1;color:#858585">57</div><div class="m" style="left:121.19px;top:121.95px;font-size:6.742px;line-height:1;white-space:pre;"><span style="color:#4fb4f0">}</span><span style="color:#e8e8e8">,</span></div><div style="left:32.20px;top:129.50px;width:8.2px;height:9.85px;background:#7a1e1c"></div><div style="left:40.29px;top:129.50px;width:8.2px;height:9.85px;background:#7c481c"></div><div style="left:48.38px;top:129.50px;width:8.2px;height:9.85px;background:#787020"></div><div style="left:56.47px;top:129.50px;width:8.2px;height:9.85px;background:#1b6a1e"></div><div style="left:64.56px;top:129.50px;width:8.2px;height:9.85px;background:#1c1c8e"></div><div style="left:72.65px;top:129.50px;width:8.2px;height:9.85px;background:#3c1c6a"></div><div style="left:80.74px;top:129.50px;width:8.2px;height:9.85px;background:#5a2078"></div><div style="left:88.83px;top:129.50px;width:8.2px;height:9.85px;background:#7a1e1c"></div><div style="left:96.92px;top:129.50px;width:8.2px;height:9.85px;background:#7c481c"></div><div style="left:105.01px;top:129.50px;width:8.2px;height:9.85px;background:#787020"></div><div class="m" style="left:14px;top:131.90px;font-size:6.77px;line-height:1;color:#858585">58</div><div class="m" style="left:113.10px;top:131.70px;font-size:6.742px;line-height:1;white-space:pre;"><span style="color:#da70d6">)</span><span style="color:#e8e8e8">, </span><span style="color:#a6a6a6">// FlatButton.icon</span></div><div style="left:32.20px;top:139.25px;width:8.2px;height:9.85px;background:#7a1e1c"></div><div style="left:40.29px;top:139.25px;width:8.2px;height:9.85px;background:#7c481c"></div><div style="left:48.38px;top:139.25px;width:8.2px;height:9.85px;background:#787020"></div><div style="left:56.47px;top:139.25px;width:8.2px;height:9.85px;background:#1b6a1e"></div><div style="left:64.56px;top:139.25px;width:8.2px;height:9.85px;background:#1c1c8e"></div><div style="left:72.65px;top:139.25px;width:8.2px;height:9.85px;background:#3c1c6a"></div><div style="left:80.74px;top:139.25px;width:8.2px;height:9.85px;background:#5a2078"></div><div style="left:88.83px;top:139.25px;width:8.2px;height:9.85px;background:#7a1e1c"></div><div style="left:96.92px;top:139.25px;width:8.2px;height:9.85px;background:#7c481c"></div><div class="m" style="left:14px;top:141.65px;font-size:6.77px;line-height:1;color:#858585">59</div><div class="m" style="left:105.01px;top:141.45px;font-size:6.742px;line-height:1;white-space:pre;"><span style="color:#ffd700">)</span><span style="color:#e8e8e8">, </span><span style="color:#a6a6a6">// Padding</span></div><div style="left:32.20px;top:149.00px;width:8.2px;height:9.85px;background:#7a1e1c"></div><div style="left:40.29px;top:149.00px;width:8.2px;height:9.85px;background:#7c481c"></div><div style="left:48.38px;top:149.00px;width:8.2px;height:9.85px;background:#787020"></div><div style="left:56.47px;top:149.00px;width:8.2px;height:9.85px;background:#1b6a1e"></div><div style="left:64.56px;top:149.00px;width:8.2px;height:9.85px;background:#1c1c8e"></div><div style="left:72.65px;top:149.00px;width:8.2px;height:9.85px;background:#3c1c6a"></div><div style="left:80.74px;top:149.00px;width:8.2px;height:9.85px;background:#5a2078"></div><div style="left:88.83px;top:149.00px;width:8.2px;height:9.85px;background:#7a1e1c"></div><div style="left:96.92px;top:149.00px;width:8.2px;height:9.85px;background:#7c481c"></div><div class="m" style="left:14px;top:151.40px;font-size:6.77px;line-height:1;color:#858585">60</div><div style="left:32.20px;top:158.75px;width:8.2px;height:9.85px;background:#7a1e1c"></div><div style="left:40.29px;top:158.75px;width:8.2px;height:9.85px;background:#7c481c"></div><div style="left:48.38px;top:158.75px;width:8.2px;height:9.85px;background:#787020"></div><div style="left:56.47px;top:158.75px;width:8.2px;height:9.85px;background:#1b6a1e"></div><div style="left:64.56px;top:158.75px;width:8.2px;height:9.85px;background:#1c1c8e"></div><div style="left:72.65px;top:158.75px;width:8.2px;height:9.85px;background:#3c1c6a"></div><div style="left:80.74px;top:158.75px;width:8.2px;height:9.85px;background:#5a2078"></div><div style="left:88.83px;top:158.75px;width:8.2px;height:9.85px;background:#7a1e1c"></div><div style="left:96.92px;top:158.75px;width:8.2px;height:9.85px;background:#7c481c"></div><div class="m" style="left:14px;top:161.15px;font-size:6.77px;line-height:1;color:#858585">61</div><div class="m" style="left:105.01px;top:160.95px;font-size:6.742px;line-height:1;white-space:pre;"><span style="color:#dcc184;font-weight:bold">Padding</span><span style="color:#ffd700">(</span></div><div style="left:32.20px;top:168.50px;width:8.2px;height:9.85px;background:#7a1e1c"></div><div style="left:40.29px;top:168.50px;width:8.2px;height:9.85px;background:#7c481c"></div><div style="left:48.38px;top:168.50px;width:8.2px;height:9.85px;background:#787020"></div><div style="left:56.47px;top:168.50px;width:8.2px;height:9.85px;background:#1b6a1e"></div><div style="left:64.56px;top:168.50px;width:8.2px;height:9.85px;background:#1c1c8e"></div><div style="left:72.65px;top:168.50px;width:8.2px;height:9.85px;background:#3c1c6a"></div><div style="left:80.74px;top:168.50px;width:8.2px;height:9.85px;background:#5a2078"></div><div style="left:88.83px;top:168.50px;width:8.2px;height:9.85px;background:#7a1e1c"></div><div style="left:96.92px;top:168.50px;width:8.2px;height:9.85px;background:#7c481c"></div><div style="left:105.01px;top:168.50px;width:8.2px;height:9.85px;background:#787020"></div><div class="m" style="left:14px;top:170.90px;font-size:6.77px;line-height:1;color:#858585">62</div><div class="m" style="left:113.10px;top:170.70px;font-size:6.742px;line-height:1;white-space:pre;"><span style="color:#e8e8e8">padding: </span><span style="color:#c586c0">const </span><span style="color:#dcc184;font-weight:bold">EdgeInsets</span><span style="color:#e8e8e8">.</span><span style="color:#5aa8e6">only</span><span style="color:#da70d6">(</span><span style="color:#e8e8e8">left: </span><span style="color:#d19a66">85</span><span style="color:#da70d6">)</span><span style="color:#e8e8e8">,</span></div><div style="left:32.20px;top:178.25px;width:8.2px;height:9.85px;background:#7a1e1c"></div><div style="left:40.29px;top:178.25px;width:8.2px;height:9.85px;background:#7c481c"></div><div style="left:48.38px;top:178.25px;width:8.2px;height:9.85px;background:#787020"></div><div style="left:56.47px;top:178.25px;width:8.2px;height:9.85px;background:#1b6a1e"></div><div style="left:64.56px;top:178.25px;width:8.2px;height:9.85px;background:#1c1c8e"></div><div style="left:72.65px;top:178.25px;width:8.2px;height:9.85px;background:#3c1c6a"></div><div style="left:80.74px;top:178.25px;width:8.2px;height:9.85px;background:#5a2078"></div><div style="left:88.83px;top:178.25px;width:8.2px;height:9.85px;background:#7a1e1c"></div><div style="left:96.92px;top:178.25px;width:8.2px;height:9.85px;background:#7c481c"></div><div style="left:105.01px;top:178.25px;width:8.2px;height:9.85px;background:#787020"></div><div class="m" style="left:14px;top:180.65px;font-size:6.77px;line-height:1;color:#858585">63</div><div class="m" style="left:113.10px;top:180.45px;font-size:6.742px;line-height:1;white-space:pre;"><span style="color:#e8e8e8">child: </span><span style="color:#dcc184;font-weight:bold">Align</span><span style="color:#da70d6">(</span></div><div style="left:32.20px;top:188.00px;width:8.2px;height:9.85px;background:#7a1e1c"></div><div style="left:40.29px;top:188.00px;width:8.2px;height:9.85px;background:#7c481c"></div><div style="left:48.38px;top:188.00px;width:8.2px;height:9.85px;background:#787020"></div><div style="left:56.47px;top:188.00px;width:8.2px;height:9.85px;background:#1b6a1e"></div><div style="left:64.56px;top:188.00px;width:8.2px;height:9.85px;background:#1c1c8e"></div><div style="left:72.65px;top:188.00px;width:8.2px;height:9.85px;background:#3c1c6a"></div><div style="left:80.74px;top:188.00px;width:8.2px;height:9.85px;background:#5a2078"></div><div style="left:88.83px;top:188.00px;width:8.2px;height:9.85px;background:#7a1e1c"></div><div style="left:96.92px;top:188.00px;width:8.2px;height:9.85px;background:#7c481c"></div><div style="left:105.01px;top:188.00px;width:8.2px;height:9.85px;background:#787020"></div><div style="left:113.10px;top:188.00px;width:8.2px;height:9.85px;background:#1b6a1e"></div><div style="left:121.19px;top:188.00px;width:8.2px;height:9.85px;background:#1c1c8e"></div><div class="m" style="left:14px;top:190.40px;font-size:6.77px;line-height:1;color:#858585">64</div><div class="m" style="left:129.28px;top:190.20px;font-size:6.742px;line-height:1;white-space:pre;"><span style="color:#e8e8e8">alignment: </span><span style="color:#dcc184;font-weight:bold">Alignment</span><span style="color:#e8e8e8">.centerRight,</span></div><div style="left:32.20px;top:197.75px;width:8.2px;height:9.85px;background:#7a1e1c"></div><div style="left:40.29px;top:197.75px;width:8.2px;height:9.85px;background:#7c481c"></div><div style="left:48.38px;top:197.75px;width:8.2px;height:9.85px;background:#787020"></div><div style="left:56.47px;top:197.75px;width:8.2px;height:9.85px;background:#1b6a1e"></div><div style="left:64.56px;top:197.75px;width:8.2px;height:9.85px;background:#1c1c8e"></div><div style="left:72.65px;top:197.75px;width:8.2px;height:9.85px;background:#3c1c6a"></div><div style="left:80.74px;top:197.75px;width:8.2px;height:9.85px;background:#5a2078"></div><div style="left:88.83px;top:197.75px;width:8.2px;height:9.85px;background:#7a1e1c"></div><div style="left:96.92px;top:197.75px;width:8.2px;height:9.85px;background:#7c481c"></div><div style="left:105.01px;top:197.75px;width:8.2px;height:9.85px;background:#787020"></div><div style="left:113.10px;top:197.75px;width:8.2px;height:9.85px;background:#1b6a1e"></div><div style="left:121.19px;top:197.75px;width:8.2px;height:9.85px;background:#1c1c8e"></div><div class="m" style="left:14px;top:200.15px;font-size:6.77px;line-height:1;color:#858585">65</div><div class="m" style="left:129.28px;top:199.95px;font-size:6.742px;line-height:1;white-space:pre;"><span style="color:#e8e8e8">child: </span><span style="color:#dcc184;font-weight:bold">FlatButton</span><span style="color:#e8e8e8">.</span><span style="color:#5aa8e6">icon</span><span style="color:#4fb4f0">(</span></div><div style="left:32.20px;top:207.50px;width:8.2px;height:9.85px;background:#7a1e1c"></div><div style="left:40.29px;top:207.50px;width:8.2px;height:9.85px;background:#7c481c"></div><div style="left:48.38px;top:207.50px;width:8.2px;height:9.85px;background:#787020"></div><div style="left:56.47px;top:207.50px;width:8.2px;height:9.85px;background:#1b6a1e"></div><div style="left:64.56px;top:207.50px;width:8.2px;height:9.85px;background:#1c1c8e"></div><div style="left:72.65px;top:207.50px;width:8.2px;height:9.85px;background:#3c1c6a"></div><div style="left:80.74px;top:207.50px;width:8.2px;height:9.85px;background:#5a2078"></div><div style="left:88.83px;top:207.50px;width:8.2px;height:9.85px;background:#7a1e1c"></div><div style="left:96.92px;top:207.50px;width:8.2px;height:9.85px;background:#7c481c"></div><div style="left:105.01px;top:207.50px;width:8.2px;height:9.85px;background:#787020"></div><div style="left:113.10px;top:207.50px;width:8.2px;height:9.85px;background:#1b6a1e"></div><div style="left:121.19px;top:207.50px;width:8.2px;height:9.85px;background:#1c1c8e"></div><div style="left:129.28px;top:207.50px;width:8.2px;height:9.85px;background:#3c1c6a"></div><div class="m" style="left:14px;top:209.90px;font-size:6.77px;line-height:1;color:#858585">66</div><div class="m" style="left:137.37px;top:209.70px;font-size:6.742px;line-height:1;white-space:pre;"><span style="color:#e8e8e8">icon: </span><span style="color:#dcc184;font-weight:bold">Icon</span><span style="color:#ffd700">(</span><span style="color:#dcc184;font-weight:bold">Icons</span><span style="color:#e8e8e8">.control_point_duplicate</span><span style="color:#ffd700">)</span><span style="color:#e8e8e8">,</span></div><div style="left:32.20px;top:217.25px;width:8.2px;height:9.85px;background:#7a1e1c"></div><div style="left:40.29px;top:217.25px;width:8.2px;height:9.85px;background:#7c481c"></div><div style="left:48.38px;top:217.25px;width:8.2px;height:9.85px;background:#787020"></div><div style="left:56.47px;top:217.25px;width:8.2px;height:9.85px;background:#1b6a1e"></div><div style="left:64.56px;top:217.25px;width:8.2px;height:9.85px;background:#1c1c8e"></div><div style="left:72.65px;top:217.25px;width:8.2px;height:9.85px;background:#3c1c6a"></div><div style="left:80.74px;top:217.25px;width:8.2px;height:9.85px;background:#5a2078"></div><div style="left:88.83px;top:217.25px;width:8.2px;height:9.85px;background:#7a1e1c"></div><div style="left:96.92px;top:217.25px;width:8.2px;height:9.85px;background:#7c481c"></div><div style="left:105.01px;top:217.25px;width:8.2px;height:9.85px;background:#787020"></div><div style="left:113.10px;top:217.25px;width:8.2px;height:9.85px;background:#1b6a1e"></div><div style="left:121.19px;top:217.25px;width:8.2px;height:9.85px;background:#1c1c8e"></div><div style="left:129.28px;top:217.25px;width:8.2px;height:9.85px;background:#3c1c6a"></div><div class="m" style="left:14px;top:219.65px;font-size:6.77px;line-height:1;color:#858585">67</div><div class="m" style="left:137.37px;top:219.45px;font-size:6.742px;line-height:1;white-space:pre;"><span style="color:#e8e8e8">label: </span><span style="color:#dcc184;font-weight:bold">Text</span><span style="color:#ffd700">(</span><span class="t" style="color:#2bbcb4;width:48.8px">&#x27;สร้างห้องเรียน&#x27;</span><span style="color:#e8e8e8">,style: </span><span style="color:#dcc184;font-weight:bold">TextStyle</span><span style="color:#da70d6">(</span><span style="color:#e8e8e8">color: </span><span style="color:#dcc184;font-weight:bold">Colors</span><span style="color:#e8e8e8">.black87,decor</span></div><div style="left:32.20px;top:227.00px;width:8.2px;height:9.85px;background:#7a1e1c"></div><div style="left:40.29px;top:227.00px;width:8.2px;height:9.85px;background:#7c481c"></div><div style="left:48.38px;top:227.00px;width:8.2px;height:9.85px;background:#787020"></div><div style="left:56.47px;top:227.00px;width:8.2px;height:9.85px;background:#1b6a1e"></div><div style="left:64.56px;top:227.00px;width:8.2px;height:9.85px;background:#1c1c8e"></div><div style="left:72.65px;top:227.00px;width:8.2px;height:9.85px;background:#3c1c6a"></div><div style="left:80.74px;top:227.00px;width:8.2px;height:9.85px;background:#5a2078"></div><div style="left:88.83px;top:227.00px;width:8.2px;height:9.85px;background:#7a1e1c"></div><div style="left:96.92px;top:227.00px;width:8.2px;height:9.85px;background:#7c481c"></div><div style="left:105.01px;top:227.00px;width:8.2px;height:9.85px;background:#787020"></div><div style="left:113.10px;top:227.00px;width:8.2px;height:9.85px;background:#1b6a1e"></div><div style="left:121.19px;top:227.00px;width:8.2px;height:9.85px;background:#1c1c8e"></div><div style="left:129.28px;top:227.00px;width:8.2px;height:9.85px;background:#3c1c6a"></div><div class="m" style="left:14px;top:229.40px;font-size:6.77px;line-height:1;color:#858585">68</div><div class="m" style="left:137.37px;top:229.20px;font-size:6.742px;line-height:1;white-space:pre;"><span style="color:#e8e8e8">onPressed: </span><span style="color:#ffd700">() {</span></div><div style="left:32.20px;top:236.75px;width:8.2px;height:9.85px;background:#7a1e1c"></div><div style="left:40.29px;top:236.75px;width:8.2px;height:9.85px;background:#7c481c"></div><div style="left:48.38px;top:236.75px;width:8.2px;height:9.85px;background:#787020"></div><div style="left:56.47px;top:236.75px;width:8.2px;height:9.85px;background:#1b6a1e"></div><div style="left:64.56px;top:236.75px;width:8.2px;height:9.85px;background:#1c1c8e"></div><div style="left:72.65px;top:236.75px;width:8.2px;height:9.85px;background:#3c1c6a"></div><div style="left:80.74px;top:236.75px;width:8.2px;height:9.85px;background:#5a2078"></div><div style="left:88.83px;top:236.75px;width:8.2px;height:9.85px;background:#7a1e1c"></div><div style="left:96.92px;top:236.75px;width:8.2px;height:9.85px;background:#7c481c"></div><div style="left:105.01px;top:236.75px;width:8.2px;height:9.85px;background:#787020"></div><div style="left:113.10px;top:236.75px;width:8.2px;height:9.85px;background:#1b6a1e"></div><div style="left:121.19px;top:236.75px;width:8.2px;height:9.85px;background:#1c1c8e"></div><div style="left:129.28px;top:236.75px;width:8.2px;height:9.85px;background:#3c1c6a"></div><div style="left:137.37px;top:236.75px;width:8.2px;height:9.85px;background:#5a2078"></div><div class="m" style="left:14px;top:239.15px;font-size:6.77px;line-height:1;color:#858585">69</div><div class="m" style="left:145.46px;top:238.95px;font-size:6.742px;line-height:1;white-space:pre;"><span style="color:#dcc184;font-weight:bold">Navigator</span><span style="color:#e8e8e8">.</span><span style="color:#5aa8e6">of</span><span style="color:#da70d6">(</span><span style="color:#e8e8e8">context</span><span style="color:#da70d6">)</span><span style="color:#e8e8e8">.</span><span style="color:#5aa8e6">pushReplacement</span><span style="color:#da70d6">(</span></div><div style="left:32.20px;top:246.50px;width:8.2px;height:9.85px;background:#7a1e1c"></div><div style="left:40.29px;top:246.50px;width:8.2px;height:9.85px;background:#7c481c"></div><div style="left:48.38px;top:246.50px;width:8.2px;height:9.85px;background:#787020"></div><div style="left:56.47px;top:246.50px;width:8.2px;height:9.85px;background:#1b6a1e"></div><div style="left:64.56px;top:246.50px;width:8.2px;height:9.85px;background:#1c1c8e"></div><div style="left:72.65px;top:246.50px;width:8.2px;height:9.85px;background:#3c1c6a"></div><div style="left:80.74px;top:246.50px;width:8.2px;height:9.85px;background:#5a2078"></div><div style="left:88.83px;top:246.50px;width:8.2px;height:9.85px;background:#7a1e1c"></div><div style="left:96.92px;top:246.50px;width:8.2px;height:9.85px;background:#7c481c"></div><div style="left:105.01px;top:246.50px;width:8.2px;height:9.85px;background:#787020"></div><div style="left:113.10px;top:246.50px;width:8.2px;height:9.85px;background:#1b6a1e"></div><div style="left:121.19px;top:246.50px;width:8.2px;height:9.85px;background:#1c1c8e"></div><div style="left:129.28px;top:246.50px;width:8.2px;height:9.85px;background:#3c1c6a"></div><div style="left:137.37px;top:246.50px;width:8.2px;height:9.85px;background:#5a2078"></div><div style="left:145.46px;top:246.50px;width:8.2px;height:9.85px;background:#7a1e1c"></div><div class="m" style="left:14px;top:248.90px;font-size:6.77px;line-height:1;color:#858585">70</div><div class="m" style="left:153.55px;top:248.70px;font-size:6.742px;line-height:1;white-space:pre;"><span style="color:#dcc184;font-weight:bold">MaterialPageRoute</span><span style="color:#4fb4f0">(</span></div><div style="left:32.20px;top:256.25px;width:8.2px;height:9.85px;background:#7a1e1c"></div><div style="left:40.29px;top:256.25px;width:8.2px;height:9.85px;background:#7c481c"></div><div style="left:48.38px;top:256.25px;width:8.2px;height:9.85px;background:#787020"></div><div style="left:56.47px;top:256.25px;width:8.2px;height:9.85px;background:#1b6a1e"></div><div style="left:64.56px;top:256.25px;width:8.2px;height:9.85px;background:#1c1c8e"></div><div style="left:72.65px;top:256.25px;width:8.2px;height:9.85px;background:#3c1c6a"></div><div style="left:80.74px;top:256.25px;width:8.2px;height:9.85px;background:#5a2078"></div><div style="left:88.83px;top:256.25px;width:8.2px;height:9.85px;background:#7a1e1c"></div><div style="left:96.92px;top:256.25px;width:8.2px;height:9.85px;background:#7c481c"></div><div style="left:105.01px;top:256.25px;width:8.2px;height:9.85px;background:#787020"></div><div style="left:113.10px;top:256.25px;width:8.2px;height:9.85px;background:#1b6a1e"></div><div style="left:121.19px;top:256.25px;width:8.2px;height:9.85px;background:#1c1c8e"></div><div style="left:129.28px;top:256.25px;width:8.2px;height:9.85px;background:#3c1c6a"></div><div style="left:137.37px;top:256.25px;width:8.2px;height:9.85px;background:#5a2078"></div><div style="left:145.46px;top:256.25px;width:8.2px;height:9.85px;background:#7a1e1c"></div><div style="left:153.55px;top:256.25px;width:8.2px;height:9.85px;background:#7c481c"></div><div class="m" style="left:14px;top:258.65px;font-size:6.77px;line-height:1;color:#858585">71</div><div class="m" style="left:161.64px;top:258.45px;font-size:6.742px;line-height:1;white-space:pre;"><span style="color:#e8e8e8">builder: </span><span style="color:#ffd700">(</span><span style="color:#dcc184;font-weight:bold">BuildContext</span><span style="color:#e8e8e8"> context</span><span style="color:#ffd700">)</span><span style="color:#e8e8e8"> =&gt; </span><span style="color:#dcc184;font-weight:bold">FirestoreCRUDPage</span><span style="color:#ffd700">() </span><span style="color:#4fb4f0">)</span><span style="color:#da70d6">)</span><span style="color:#e8e8e8">;  </span><span style="color:#a6a6a6">// M</span></div><div style="left:32.20px;top:266.00px;width:8.2px;height:9.85px;background:#7a1e1c"></div><div style="left:40.29px;top:266.00px;width:8.2px;height:9.85px;background:#7c481c"></div><div style="left:48.38px;top:266.00px;width:8.2px;height:9.85px;background:#787020"></div><div style="left:56.47px;top:266.00px;width:8.2px;height:9.85px;background:#1b6a1e"></div><div style="left:64.56px;top:266.00px;width:8.2px;height:9.85px;background:#1c1c8e"></div><div style="left:72.65px;top:266.00px;width:8.2px;height:9.85px;background:#3c1c6a"></div><div style="left:80.74px;top:266.00px;width:8.2px;height:9.85px;background:#5a2078"></div><div style="left:88.83px;top:266.00px;width:8.2px;height:9.85px;background:#7a1e1c"></div><div style="left:96.92px;top:266.00px;width:8.2px;height:9.85px;background:#7c481c"></div><div style="left:105.01px;top:266.00px;width:8.2px;height:9.85px;background:#787020"></div><div style="left:113.10px;top:266.00px;width:8.2px;height:9.85px;background:#1b6a1e"></div><div style="left:121.19px;top:266.00px;width:8.2px;height:9.85px;background:#1c1c8e"></div><div style="left:129.28px;top:266.00px;width:8.2px;height:9.85px;background:#3c1c6a"></div><div class="m" style="left:14px;top:268.40px;font-size:6.77px;line-height:1;color:#858585">72</div><div class="m" style="left:137.37px;top:268.20px;font-size:6.742px;line-height:1;white-space:pre;"><span style="color:#ffd700">}</span><span style="color:#e8e8e8">,</span></div><div style="left:32.20px;top:275.75px;width:8.2px;height:9.85px;background:#7a1e1c"></div><div style="left:40.29px;top:275.75px;width:8.2px;height:9.85px;background:#7c481c"></div><div style="left:48.38px;top:275.75px;width:8.2px;height:9.85px;background:#787020"></div><div style="left:56.47px;top:275.75px;width:8.2px;height:9.85px;background:#1b6a1e"></div><div style="left:64.56px;top:275.75px;width:8.2px;height:9.85px;background:#1c1c8e"></div><div style="left:72.65px;top:275.75px;width:8.2px;height:9.85px;background:#3c1c6a"></div><div style="left:80.74px;top:275.75px;width:8.2px;height:9.85px;background:#5a2078"></div><div style="left:88.83px;top:275.75px;width:8.2px;height:9.85px;background:#7a1e1c"></div><div style="left:96.92px;top:275.75px;width:8.2px;height:9.85px;background:#7c481c"></div><div style="left:105.01px;top:275.75px;width:8.2px;height:9.85px;background:#787020"></div><div style="left:113.10px;top:275.75px;width:8.2px;height:9.85px;background:#1b6a1e"></div><div style="left:121.19px;top:275.75px;width:8.2px;height:9.85px;background:#1c1c8e"></div><div class="m" style="left:14px;top:278.15px;font-size:6.77px;line-height:1;color:#858585">73</div><div class="m" style="left:129.28px;top:277.95px;font-size:6.742px;line-height:1;white-space:pre;"><span style="color:#4fb4f0">)</span><span style="color:#e8e8e8">, </span><span style="color:#a6a6a6">// FlatButton.icon</span></div><div style="left:32.20px;top:285.50px;width:8.2px;height:9.85px;background:#7a1e1c"></div><div style="left:40.29px;top:285.50px;width:8.2px;height:9.85px;background:#7c481c"></div><div style="left:48.38px;top:285.50px;width:8.2px;height:9.85px;background:#787020"></div><div style="left:56.47px;top:285.50px;width:8.2px;height:9.85px;background:#1b6a1e"></div><div style="left:64.56px;top:285.50px;width:8.2px;height:9.85px;background:#1c1c8e"></div><div style="left:72.65px;top:285.50px;width:8.2px;height:9.85px;background:#3c1c6a"></div><div style="left:80.74px;top:285.50px;width:8.2px;height:9.85px;background:#5a2078"></div><div style="left:88.83px;top:285.50px;width:8.2px;height:9.85px;background:#7a1e1c"></div><div style="left:96.92px;top:285.50px;width:8.2px;height:9.85px;background:#7c481c"></div><div style="left:105.01px;top:285.50px;width:8.2px;height:9.85px;background:#787020"></div><div style="left:113.10px;top:285.50px;width:8.2px;height:9.85px;background:#1b6a1e"></div><div class="m" style="left:14px;top:287.90px;font-size:6.77px;line-height:1;color:#858585">74</div><div class="m" style="left:121.19px;top:287.70px;font-size:6.742px;line-height:1;white-space:pre;"><span style="color:#da70d6">)</span><span style="color:#e8e8e8">, </span><span style="color:#a6a6a6">// Align</span></div><div style="left:32.20px;top:295.25px;width:8.2px;height:9.85px;background:#7a1e1c"></div><div style="left:40.29px;top:295.25px;width:8.2px;height:9.85px;background:#7c481c"></div><div style="left:48.38px;top:295.25px;width:8.2px;height:9.85px;background:#787020"></div><div style="left:56.47px;top:295.25px;width:8.2px;height:9.85px;background:#1b6a1e"></div><div style="left:64.56px;top:295.25px;width:8.2px;height:9.85px;background:#1c1c8e"></div><div style="left:72.65px;top:295.25px;width:8.2px;height:9.85px;background:#3c1c6a"></div><div style="left:80.74px;top:295.25px;width:8.2px;height:9.85px;background:#5a2078"></div><div style="left:88.83px;top:295.25px;width:8.2px;height:9.85px;background:#7a1e1c"></div><div style="left:96.92px;top:295.25px;width:8.2px;height:9.85px;background:#7c481c"></div><div class="m" style="left:14px;top:297.65px;font-size:6.77px;line-height:1;color:#858585">75</div><div class="m" style="left:105.01px;top:297.45px;font-size:6.742px;line-height:1;white-space:pre;"><span style="color:#ffd700">)</span><span style="color:#e8e8e8">, </span><span style="color:#a6a6a6">// Padding</span></div><div style="left:32.20px;top:305.00px;width:8.2px;height:9.85px;background:#7a1e1c"></div><div style="left:40.29px;top:305.00px;width:8.2px;height:9.85px;background:#7c481c"></div><div style="left:48.38px;top:305.00px;width:8.2px;height:9.85px;background:#787020"></div><div style="left:56.47px;top:305.00px;width:8.2px;height:9.85px;background:#1b6a1e"></div><div style="left:64.56px;top:305.00px;width:8.2px;height:9.85px;background:#1c1c8e"></div><div style="left:72.65px;top:305.00px;width:8.2px;height:9.85px;background:#3c1c6a"></div><div style="left:80.74px;top:305.00px;width:8.2px;height:9.85px;background:#5a2078"></div><div style="left:88.83px;top:305.00px;width:8.2px;height:9.85px;background:#7a1e1c"></div><div class="m" style="left:14px;top:307.40px;font-size:6.77px;line-height:1;color:#858585">76</div><div style="left:32.20px;top:314.75px;width:8.2px;height:9.85px;background:#7a1e1c"></div><div style="left:40.29px;top:314.75px;width:8.2px;height:9.85px;background:#7c481c"></div><div style="left:48.38px;top:314.75px;width:8.2px;height:9.85px;background:#787020"></div><div style="left:56.47px;top:314.75px;width:8.2px;height:9.85px;background:#1b6a1e"></div><div style="left:64.56px;top:314.75px;width:8.2px;height:9.85px;background:#1c1c8e"></div><div style="left:72.65px;top:314.75px;width:8.2px;height:9.85px;background:#3c1c6a"></div><div style="left:80.74px;top:314.75px;width:8.2px;height:9.85px;background:#5a2078"></div><div style="left:88.83px;top:314.75px;width:8.2px;height:9.85px;background:#7a1e1c"></div><div class="m" style="left:14px;top:317.15px;font-size:6.77px;line-height:1;color:#858585">77</div><div class="m" style="left:96.92px;top:316.95px;font-size:6.742px;line-height:1;white-space:pre;"><span style="color:#4fb4f0">]</span><span style="color:#e8e8e8">, </span><span style="color:#a6a6a6">// &lt;Widget&gt;[]</span></div><div style="left:32.20px;top:324.50px;width:8.2px;height:9.85px;background:#7a1e1c"></div><div style="left:40.29px;top:324.50px;width:8.2px;height:9.85px;background:#7c481c"></div><div style="left:48.38px;top:324.50px;width:8.2px;height:9.85px;background:#787020"></div><div style="left:56.47px;top:324.50px;width:8.2px;height:9.85px;background:#1b6a1e"></div><div style="left:64.56px;top:324.50px;width:8.2px;height:9.85px;background:#1c1c8e"></div><div style="left:72.65px;top:324.50px;width:8.2px;height:9.85px;background:#3c1c6a"></div><div style="left:80.74px;top:324.50px;width:8.2px;height:9.85px;background:#5a2078"></div><div class="m" style="left:14px;top:326.90px;font-size:6.77px;line-height:1;color:#858585">78</div><div class="m" style="left:88.83px;top:326.70px;font-size:6.742px;line-height:1;white-space:pre;"><span style="color:#da70d6">)</span><span style="color:#e8e8e8">, </span><span style="color:#a6a6a6">// Row</span></div><div style="left:32.20px;top:0;width:8.2px;height:3px;background:#7a1e1c"></div><div style="left:40.29px;top:0;width:8.2px;height:3px;background:#7c481c"></div><div style="left:48.38px;top:0;width:8.2px;height:3px;background:#787020"></div><div style="left:56.47px;top:0;width:8.2px;height:3px;background:#1b6a1e"></div></div>
<div style="left:272.4px;top:160.8px;width:3.4px;height:3.6px;background:#f2c012;border-radius:50% 50% 40% 40%;"></div>
<div style="left:273.3px;top:164.4px;width:1.6px;height:1.2px;background:#c9a227;"></div>
<div style="left:452.5px;top:357.5px;font-size:9px;color:#bdbdbd;white-space:nowrap;line-height:1;font-family:'Liberation Serif',serif;">I</div>
<div style="left:238px;top:404px;width:690px;height:49px;background:#1e1e1e;"></div>
<div style="left:238px;top:404px;width:690px;height:0.8px;background:#3a3a3a;"></div>
<div style="left:245.8px;top:409px;font-size:4.2px;color:#9a9a9a;white-space:nowrap;line-height:1;">PROBLEMS</div>
<div style="left:272px;top:407.2px;width:7.5px;height:6.5px;background:#4d4d4d;border-radius:3.200px;"></div>
<div style="left:273.5px;top:408.9px;font-size:4.4px;color:#e0e0e0;white-space:nowrap;line-height:1;">25</div>
<div style="left:288px;top:409px;font-size:4.4px;color:#e0e0e0;white-space:nowrap;line-height:1;font-weight:bold">DEBUG CONSOLE</div>
<div class="m" style="left:249.5px;top:417.3px;font-size:5.4px;color:#c8c8c8;white-space:nowrap;line-height:1;">W/ample.livelear( 28785): Accessing hidden method Lsun/misc/Unsafe;-&gt;getObject (light greylist, linking)</div>
<div class="m" style="left:249.5px;top:425.0px;font-size:5.4px;color:#c8c8c8;white-space:nowrap;line-height:1;">W/Firestore( 28785): (21.3.0) [Firestore]: Listen for Query(rooms order by __name__) failed: Status{code=PERMISSION_DENIED</div>
<div class="m" style="left:249.5px;top:432.7px;font-size:5.4px;color:#c8c8c8;white-space:nowrap;line-height:1;">I/System.out( 28785): com.google.firebase.firestore.FirebaseFirestoreException: PERMISSION_DENIED: Missing or insufficient permissions.</div>
<div class="m" style="left:249.5px;top:440.40000000000003px;font-size:5.4px;color:#c8c8c8;white-space:nowrap;line-height:1;">W/ample.livelear( 28785): Accessing hidden method Lsun/misc/Unsafe;-&gt;putObject (light greylist, linking)</div>
<div style="left:243px;top:446.5px;font-size:7px;color:#c0c0c0;white-space:nowrap;line-height:1;">›</div>
<svg style="left:874px;top:36px" width="52" height="9" viewBox="0 0 52 9" fill="none" stroke="#8a8a8a" stroke-width=".8"><path d="M4 4.500h4M21 3h4v4h-4zM22.500 3V1.800h4v4H25M39 2.500l4 4M43 2.500l-4 4"/></svg>
<svg style="left:903px;top:49px" width="24" height="8" viewBox="0 0 24 8" fill="none" stroke="#a0a0a0" stroke-width=".8"><path d="M2 1h5v6H2zM4.500 1v6"/></svg>
<div style="left:917px;top:48px;font-size:6px;color:#a0a0a0;white-space:nowrap;line-height:1;">···</div>
<div style="left:872px;top:60.5px;width:25.5px;height:12.5px;background:#2f2f30;box-shadow:0 1px 2px rgba(0,0,0,.5);"></div>
<svg style="left:874.500px;top:63px" width="22" height="8" viewBox="0 0 22 8" fill="none"><path d="M2.200 4a2.200 2.200 0 1 0 1-1.900M1.500 .8v1.700h1.700" stroke="#5fb760" stroke-width=".9"/><rect x="14.500" y="1.500" width="5" height="5" stroke="#e8775a" stroke-width=".9"/></svg>
<div style="left:871.5px;top:60px;width:51px;height:344px;background:rgba(22,22,25,.5);"></div>
<div style="left:877.3px;top:77.0px;width:8px;height:.8px;background:#6f8fa5;opacity:0.31"></div><div style="left:877.9px;top:78.2px;width:10px;height:.8px;background:#6f8fa5;opacity:0.32"></div><div style="left:879.3px;top:79.4px;width:14px;height:.8px;background:#a5905a;opacity:0.25"></div><div style="left:881.8px;top:80.6px;width:24px;height:.8px;background:#5f9f8f;opacity:0.41"></div><div style="left:883.4px;top:81.8px;width:5px;height:.8px;background:#8f8a70;opacity:0.39"></div><div style="left:884.3px;top:83.0px;width:11px;height:.8px;background:#9a7f9a;opacity:0.34"></div><div style="left:884.7px;top:84.2px;width:11px;height:.8px;background:#7a7a7a;opacity:0.32"></div><div style="left:884.0px;top:85.4px;width:7px;height:.8px;background:#5f9f8f;opacity:0.31"></div><div style="left:883.9px;top:86.6px;width:7px;height:.8px;background:#6f8fa5;opacity:0.36"></div><div style="left:881.6px;top:87.8px;width:5px;height:.8px;background:#7a7a7a;opacity:0.23"></div><div style="left:876.1px;top:91.4px;width:24px;height:.8px;background:#8f8a70;opacity:0.42"></div><div style="left:876.3px;top:97.6px;width:14px;height:.8px;background:#8f8a70;opacity:0.29"></div><div style="left:879.0px;top:98.8px;width:7px;height:.8px;background:#8f8a70;opacity:0.25"></div><div style="left:879.3px;top:100.0px;width:8px;height:.8px;background:#7a7a7a;opacity:0.26"></div><div style="left:881.6px;top:101.2px;width:9px;height:.8px;background:#7a7a7a;opacity:0.30"></div><div style="left:883.0px;top:102.4px;width:11px;height:.8px;background:#5f9f8f;opacity:0.22"></div><div style="left:884.5px;top:103.6px;width:5px;height:.8px;background:#5f9f8f;opacity:0.26"></div><div style="left:885.0px;top:104.8px;width:7px;height:.8px;background:#7a7a7a;opacity:0.23"></div><div style="left:884.4px;top:106.0px;width:18px;height:.8px;background:#8f8a70;opacity:0.39"></div><div style="left:884.1px;top:107.2px;width:11px;height:.8px;background:#5f9f8f;opacity:0.22"></div><div style="left:884.7px;top:108.4px;width:8px;height:.8px;background:#7a7a7a;opacity:0.39"></div><div style="left:884.3px;top:109.6px;width:9px;height:.8px;background:#5f9f8f;opacity:0.28"></div><div style="left:882.8px;top:110.8px;width:11px;height:.8px;background:#5f9f8f;opacity:0.25"></div><div style="left:881.1px;top:112.0px;width:24px;height:.8px;background:#7a7a7a;opacity:0.40"></div><div style="left:878.0px;top:114.4px;width:24px;height:.8px;background:#5f9f8f;opacity:0.27"></div><div style="left:876.7px;top:115.6px;width:10px;height:.8px;background:#8f8a70;opacity:0.26"></div><div style="left:877.9px;top:119.5px;width:5px;height:.8px;background:#6f8fa5;opacity:0.23"></div><div style="left:879.3px;top:120.7px;width:9px;height:.8px;background:#6f8fa5;opacity:0.28"></div><div style="left:883.4px;top:123.1px;width:10px;height:.8px;background:#8f8a70;opacity:0.34"></div><div style="left:882.2px;top:124.3px;width:8px;height:.8px;background:#8f8a70;opacity:0.40"></div><div style="left:879.2px;top:125.5px;width:7px;height:.8px;background:#9a7f9a;opacity:0.32"></div><div style="left:877.8px;top:126.7px;width:7px;height:.8px;background:#a5905a;opacity:0.24"></div><div style="left:877.0px;top:132.1px;width:7px;height:.8px;background:#8f8a70;opacity:0.39"></div><div style="left:878.9px;top:133.3px;width:5px;height:.8px;background:#5f9f8f;opacity:0.34"></div><div style="left:879.2px;top:134.5px;width:7px;height:.8px;background:#9a7f9a;opacity:0.24"></div><div style="left:882.1px;top:135.7px;width:18px;height:.8px;background:#5f9f8f;opacity:0.30"></div><div style="left:879.9px;top:136.9px;width:8px;height:.8px;background:#5f9f8f;opacity:0.39"></div><div style="left:877.6px;top:138.1px;width:7px;height:.8px;background:#a5905a;opacity:0.32"></div><div style="left:876.2px;top:139.3px;width:8px;height:.8px;background:#9a7f9a;opacity:0.27"></div><div style="left:878.6px;top:143.2px;width:8px;height:.8px;background:#7a7a7a;opacity:0.32"></div><div style="left:880.2px;top:144.4px;width:11px;height:.8px;background:#6f8fa5;opacity:0.35"></div><div style="left:882.7px;top:146.8px;width:9px;height:.8px;background:#8f8a70;opacity:0.32"></div><div style="left:885.1px;top:148.0px;width:14px;height:.8px;background:#7a7a7a;opacity:0.38"></div><div style="left:884.4px;top:149.2px;width:11px;height:.8px;background:#5f9f8f;opacity:0.39"></div><div style="left:884.7px;top:150.4px;width:18px;height:.8px;background:#5f9f8f;opacity:0.36"></div><div style="left:884.7px;top:151.6px;width:7px;height:.8px;background:#5f9f8f;opacity:0.39"></div><div style="left:884.1px;top:152.8px;width:14px;height:.8px;background:#5f9f8f;opacity:0.33"></div><div style="left:884.0px;top:154.0px;width:9px;height:.8px;background:#9a7f9a;opacity:0.30"></div><div style="left:881.0px;top:156.4px;width:7px;height:.8px;background:#9a7f9a;opacity:0.35"></div><div style="left:880.6px;top:157.6px;width:11px;height:.8px;background:#6f8fa5;opacity:0.26"></div><div style="left:878.7px;top:158.8px;width:8px;height:.8px;background:#6f8fa5;opacity:0.33"></div><div style="left:877.5px;top:166.2px;width:9px;height:.8px;background:#6f8fa5;opacity:0.30"></div><div style="left:877.7px;top:167.4px;width:24px;height:.8px;background:#a5905a;opacity:0.25"></div><div style="left:880.5px;top:168.6px;width:5px;height:.8px;background:#5f9f8f;opacity:0.30"></div><div style="left:882.0px;top:169.8px;width:18px;height:.8px;background:#6f8fa5;opacity:0.31"></div><div style="left:882.5px;top:171.0px;width:7px;height:.8px;background:#8f8a70;opacity:0.26"></div><div style="left:884.4px;top:173.4px;width:5px;height:.8px;background:#7a7a7a;opacity:0.29"></div><div style="left:884.5px;top:174.6px;width:24px;height:.8px;background:#8f8a70;opacity:0.37"></div><div style="left:884.3px;top:175.8px;width:7px;height:.8px;background:#5f9f8f;opacity:0.31"></div><div style="left:883.8px;top:178.2px;width:10px;height:.8px;background:#7a7a7a;opacity:0.39"></div><div style="left:881.7px;top:179.4px;width:7px;height:.8px;background:#5f9f8f;opacity:0.37"></div><div style="left:879.6px;top:180.6px;width:10px;height:.8px;background:#5f9f8f;opacity:0.35"></div><div style="left:878.0px;top:181.8px;width:24px;height:.8px;background:#5f9f8f;opacity:0.41"></div><div style="left:876.3px;top:183.0px;width:9px;height:.8px;background:#5f9f8f;opacity:0.41"></div><div style="left:876.6px;top:187.2px;width:7px;height:.8px;background:#8f8a70;opacity:0.32"></div><div style="left:878.4px;top:188.4px;width:5px;height:.8px;background:#5f9f8f;opacity:0.32"></div><div style="left:879.4px;top:189.6px;width:7px;height:.8px;background:#5f9f8f;opacity:0.36"></div><div style="left:881.5px;top:190.8px;width:24px;height:.8px;background:#6f8fa5;opacity:0.27"></div><div style="left:882.9px;top:192.0px;width:8px;height:.8px;background:#7a7a7a;opacity:0.32"></div><div style="left:881.7px;top:193.2px;width:14px;height:.8px;background:#8f8a70;opacity:0.25"></div><div style="left:879.3px;top:194.4px;width:9px;height:.8px;background:#9a7f9a;opacity:0.27"></div><div style="left:878.7px;top:195.6px;width:11px;height:.8px;background:#a5905a;opacity:0.34"></div><div style="left:876.9px;top:196.8px;width:10px;height:.8px;background:#a5905a;opacity:0.34"></div><div style="left:876.0px;top:203.0px;width:24px;height:.8px;background:#5f9f8f;opacity:0.39"></div><div style="left:877.9px;top:204.2px;width:10px;height:.8px;background:#5f9f8f;opacity:0.35"></div><div style="left:880.1px;top:205.4px;width:9px;height:.8px;background:#9a7f9a;opacity:0.27"></div><div style="left:882.2px;top:206.6px;width:18px;height:.8px;background:#6f8fa5;opacity:0.34"></div><div style="left:882.7px;top:207.8px;width:11px;height:.8px;background:#6f8fa5;opacity:0.40"></div><div style="left:884.2px;top:209.0px;width:7px;height:.8px;background:#7a7a7a;opacity:0.27"></div><div style="left:884.8px;top:210.2px;width:9px;height:.8px;background:#8f8a70;opacity:0.26"></div><div style="left:881.0px;top:212.6px;width:10px;height:.8px;background:#a5905a;opacity:0.35"></div><div style="left:880.4px;top:213.8px;width:7px;height:.8px;background:#5f9f8f;opacity:0.32"></div><div style="left:878.5px;top:215.0px;width:8px;height:.8px;background:#6f8fa5;opacity:0.25"></div><div style="left:876.1px;top:218.9px;width:8px;height:.8px;background:#7a7a7a;opacity:0.24"></div><div style="left:878.3px;top:220.1px;width:10px;height:.8px;background:#9a7f9a;opacity:0.29"></div><div style="left:879.2px;top:221.3px;width:5px;height:.8px;background:#7a7a7a;opacity:0.39"></div><div style="left:881.3px;top:222.5px;width:18px;height:.8px;background:#6f8fa5;opacity:0.30"></div><div style="left:882.5px;top:223.7px;width:5px;height:.8px;background:#a5905a;opacity:0.28"></div><div style="left:885.3px;top:224.9px;width:24px;height:.8px;background:#5f9f8f;opacity:0.33"></div><div style="left:885.5px;top:226.1px;width:14px;height:.8px;background:#a5905a;opacity:0.28"></div><div style="left:885.2px;top:227.3px;width:24px;height:.8px;background:#5f9f8f;opacity:0.25"></div><div style="left:885.0px;top:228.5px;width:24px;height:.8px;background:#a5905a;opacity:0.37"></div><div style="left:884.3px;top:229.7px;width:18px;height:.8px;background:#9a7f9a;opacity:0.28"></div><div style="left:881.8px;top:232.1px;width:18px;height:.8px;background:#6f8fa5;opacity:0.26"></div><div style="left:880.0px;top:233.3px;width:24px;height:.8px;background:#6f8fa5;opacity:0.32"></div><div style="left:878.7px;top:234.5px;width:24px;height:.8px;background:#5f9f8f;opacity:0.42"></div><div style="left:876.2px;top:235.7px;width:11px;height:.8px;background:#8f8a70;opacity:0.27"></div><div style="left:876.6px;top:238.4px;width:7px;height:.8px;background:#9a7f9a;opacity:0.27"></div><div style="left:878.4px;top:239.6px;width:10px;height:.8px;background:#8f8a70;opacity:0.30"></div><div style="left:880.2px;top:240.8px;width:7px;height:.8px;background:#8f8a70;opacity:0.33"></div><div style="left:883.7px;top:243.2px;width:10px;height:.8px;background:#7a7a7a;opacity:0.34"></div><div style="left:884.6px;top:244.4px;width:10px;height:.8px;background:#5f9f8f;opacity:0.30"></div><div style="left:884.4px;top:245.6px;width:14px;height:.8px;background:#a5905a;opacity:0.33"></div><div style="left:885.1px;top:246.8px;width:5px;height:.8px;background:#8f8a70;opacity:0.22"></div><div style="left:884.9px;top:248.0px;width:24px;height:.8px;background:#9a7f9a;opacity:0.37"></div><div style="left:884.5px;top:250.4px;width:11px;height:.8px;background:#6f8fa5;opacity:0.31"></div><div style="left:881.5px;top:252.8px;width:11px;height:.8px;background:#5f9f8f;opacity:0.34"></div><div style="left:879.8px;top:254.0px;width:7px;height:.8px;background:#5f9f8f;opacity:0.26"></div><div style="left:877.8px;top:255.2px;width:18px;height:.8px;background:#7a7a7a;opacity:0.31"></div><div style="left:877.1px;top:259.1px;width:11px;height:.8px;background:#9a7f9a;opacity:0.32"></div><div style="left:878.8px;top:260.3px;width:18px;height:.8px;background:#a5905a;opacity:0.27"></div><div style="left:882.7px;top:263.9px;width:3px;height:.8px;background:#9a7f9a;opacity:0.16"></div><div style="left:880.9px;top:266.3px;width:4px;height:.8px;background:#6f8fa5;opacity:0.19"></div><div style="left:876.6px;top:272.6px;width:8px;height:.8px;background:#6f8fa5;opacity:0.14"></div><div style="left:880.9px;top:276.2px;width:11px;height:.8px;background:#5f9f8f;opacity:0.11"></div><div style="left:880.5px;top:292.1px;width:3px;height:.8px;background:#6f8fa5;opacity:0.12"></div><div style="left:876.3px;top:309.2px;width:14px;height:.8px;background:#8f8a70;opacity:0.15"></div><div style="left:878.3px;top:310.4px;width:4px;height:.8px;background:#6f8fa5;opacity:0.13"></div><div style="left:882.0px;top:312.8px;width:11px;height:.8px;background:#6f8fa5;opacity:0.11"></div><div style="left:883.3px;top:314.0px;width:5px;height:.8px;background:#6f8fa5;opacity:0.16"></div><div style="left:879.7px;top:318.8px;width:6px;height:.8px;background:#6f8fa5;opacity:0.18"></div><div style="left:879.4px;top:326.3px;width:5px;height:.8px;background:#5f9f8f;opacity:0.18"></div><div style="left:881.0px;top:327.5px;width:8px;height:.8px;background:#5f9f8f;opacity:0.15"></div><div style="left:884.2px;top:329.9px;width:5px;height:.8px;background:#a5905a;opacity:0.11"></div><div style="left:884.8px;top:331.1px;width:5px;height:.8px;background:#a5905a;opacity:0.17"></div><div style="left:884.1px;top:334.7px;width:14px;height:.8px;background:#9a7f9a;opacity:0.15"></div><div style="left:880.4px;top:339.5px;width:4px;height:.8px;background:#7a7a7a;opacity:0.17"></div><div style="left:880.0px;top:350.5px;width:4px;height:.8px;background:#a5905a;opacity:0.13"></div><div style="left:878.5px;top:356.5px;width:4px;height:.8px;background:#8f8a70;opacity:0.11"></div><div style="left:877.5px;top:375.0px;width:7px;height:.8px;background:#a5905a;opacity:0.16"></div><div style="left:884.8px;top:381.0px;width:6px;height:.8px;background:#a5905a;opacity:0.19"></div><div style="left:885.5px;top:382.2px;width:11px;height:.8px;background:#8f8a70;opacity:0.16"></div>
<div style="left:922.8px;top:115px;width:4.2px;height:34px;background:#424245;opacity:.85;"></div>
<div style="left:926px;top:72.5px;width:2px;height:3px;background:#3794ff;"></div>
<div style="left:926px;top:86.5px;width:2px;height:3px;background:#3794ff;"></div>
<div style="left:926px;top:179px;width:2px;height:2px;background:#c9901a;opacity:.8;"></div>
<div style="left:926px;top:185px;width:2px;height:2px;background:#c9901a;opacity:.8;"></div>
<div style="left:926px;top:224px;width:2px;height:2px;background:#c9901a;opacity:.8;"></div>
<div style="left:926px;top:230px;width:2px;height:2px;background:#c9901a;opacity:.8;"></div>
<div style="left:926px;top:270px;width:2px;height:2px;background:#c9901a;opacity:.8;"></div>
<div style="left:926px;top:275px;width:2px;height:2px;background:#b8761a;opacity:.8;"></div>
<div style="left:147px;top:453px;width:781px;height:9.2px;background:#d9732f;"></div>
<svg style="left:152.500px;top:454.800px" width="40" height="7" viewBox="0 0 40 7"><circle cx="3" cy="3.500" r="2.500" fill="none" stroke="#fff" stroke-width=".9"/><path d="M2 2.500l2 2M4 2.500l-2 2" stroke="#fff" stroke-width=".7"/><path d="M14 .8l3 5.400h-6z" fill="#fff"/><circle cx="25.500" cy="3.500" r="2.800" fill="#fff"/><path d="M25.500 2v2M25.500 4.800v.6" stroke="#d9732f" stroke-width=".8"/></svg>
<div style="left:159.8px;top:457.3px;font-size:4.8px;color:#fff;white-space:nowrap;line-height:1;">0</div>
<div style="left:172.3px;top:457.3px;font-size:4.8px;color:#fff;white-space:nowrap;line-height:1;">6</div>
<div style="left:182.6px;top:457.3px;font-size:4.8px;color:#fff;white-space:nowrap;line-height:1;">10</div>
<div style="left:193px;top:456.6px;font-size:4.7px;color:#ffe9d8;white-space:nowrap;line-height:1;font-weight:bold;letter-spacing:-.05px">POWER MODE!!! Combo: 17</div>
<div style="left:147px;top:462.2px;width:781px;height:12.8px;background:#0f0f10;"></div>
<svg style="left:150.500px;top:465px" width="8" height="8" viewBox="0 0 8 8"><path d="M0 1.200 3.300.7v3H0zM3.800.600 8 0v3.700H3.800zM0 4.200h3.300v3L0 6.800zM3.800 4.200H8V8l-4.200-.6z" fill="#f2f2f2"/></svg>
<div style="left:208.5px;top:462.2px;width:14px;height:12.8px;background:#2c2c2e;"></div>
<div style="left:164.5px;top:474px;width:11px;height:1px;background:#d67a9c;"></div>
<div style="left:179.5px;top:474px;width:11px;height:1px;background:#d67a9c;"></div>
<div style="left:194.5px;top:474px;width:11px;height:1px;background:#d67a9c;"></div>
<div style="left:209.5px;top:474px;width:11px;height:1px;background:#d67a9c;"></div>
<div style="left:224.5px;top:474px;width:11px;height:1px;background:#d67a9c;"></div>
<div style="left:239.5px;top:474px;width:11px;height:1px;background:#d67a9c;"></div>
<div style="left:166.800px;top:465.300px;width:6.400px;height:6.400px;border-radius:50%;background:conic-gradient(from 60deg,#fbc116 0 120deg,#3aa757 120deg 240deg,#e94335 240deg 360deg)"></div><div style="left:168.700px;top:467.200px;width:2.600px;height:2.600px;border-radius:50%;background:#4c8bf5;border:.5px solid #fff"></div>
<svg style="left:181.800px;top:465.200px" width="6.600" height="6.600" viewBox="0 0 24 24"><path d="M17.500 1 7 11 3 8 1 9l3.500 3L1 15l2 1 4-3 10.500 10 5.500-2.500V3.500zM17.500 7v10L11 12z" fill="#2a9df4"/></svg>
<div style="left:196.8px;top:465.3px;width:6.4px;height:6.4px;background:#e8356a;border-radius:50%;"></div>
<div style="left:198.3px;top:467.7px;width:3.4px;height:1.6px;border:.5px solid #ffd0dc;border-radius:1px;"></div>
<div style="left:211.7px;top:465.2px;width:6.6px;height:6.6px;background:#f6e4ea;border-radius:50%;"></div>
<div style="left:213px;top:467.5px;width:1.8px;height:1.8px;border:.5px solid #e8356a;border-radius:50%;"></div>
<div style="left:215.2px;top:467.5px;width:1.8px;height:1.8px;border:.5px solid #e8356a;border-radius:50%;"></div>
<div style="left:227.8px;top:465.8px;width:5.4px;height:5.4px;background:#5558af;border-radius:1px;"></div>
<div style="left:231.3px;top:464.8px;width:2.4px;height:2.4px;background:#7b83eb;border-radius:50%;"></div>
<div style="left:226.6px;top:466.6px;width:3.6px;height:3.6px;background:#4b53bc;border-radius:.5px;"></div>
<div style="left:242px;top:465.3px;width:6.2px;height:6.2px;background:#1a6fd0;border-radius:.5px;"></div>
<div style="left:243px;top:467.8px;width:4.2px;height:3px;background:#5fb0f0;border-radius:.3px;opacity:.8;"></div>
<div style="left:878px;top:466.7px;font-size:4.4px;color:#d8d8d8;white-space:nowrap;line-height:1;">ENG</div>
<div style="left:893px;top:466.7px;font-size:4.4px;color:#d8d8d8;white-space:nowrap;line-height:1;">12:58</div>
<svg style="left:814.500px;top:464.800px" width="60" height="8" viewBox="0 0 60 8" fill="none" stroke="#d0d0d0" stroke-width=".8"><path d="M2 5.500 4.500 3 7 5.500"/><rect x="13" y="2.500" width="5" height="3.500"/><rect x="22" y="2.500" width="6" height="3.500" fill="#d0d0d0"/><path d="M33 3.500h1.500l2-1.500v5l-2-1.500H33zM38 2.500c1 1 1 2.500 0 3.500"/><path d="M44 7c0-2 1.500-3.500 3.500-3.500M44 7c0-3.500 2.500-5.500 5-5.500"/><rect x="53" y="2" width="7" height="4"/></svg>
<div style="left:911.5px;top:465.3px;width:6.5px;height:6.5px;border:.8px solid #d0d0d0;"></div>
<div style="left:655.2px;top:36.5px;width:216px;height:424px;background:#000;"></div>
<div style="left:655.2px;top:36.5px;width:216px;height:12.4px;background:#ffffff;"></div>
<svg style="left:658.500px;top:40.500px" width="7" height="5" viewBox="0 0 7 5" fill="none" stroke="#e8386a" stroke-width=".8"><circle cx="2" cy="2.500" r="1.400"/><circle cx="5" cy="2.500" r="1.400"/></svg>
<div style="left:667.5px;top:40.6px;font-size:4.55px;color:#222;white-space:nowrap;line-height:1;">Genymotion for personal use - Samsung Galaxy S8 (1440x2960, 560...</div>
<svg style="left:820px;top:37.400px" width="50" height="8" viewBox="0 0 50 8" fill="none" stroke="#222" stroke-width=".9"><path d="M3 5h4.500M22.500 2h4v4h-4zM40.500 1.800l4.200 4.200M44.700 1.800l-4.200 4.200"/></svg>
<div style="left:855.3px;top:48.9px;width:15.9px;height:411.6px;background:#060606;"></div>
<svg style="left:858.800px;top:52.5px" width="9" height="8" viewBox="0 0 9 8"><rect x="1.500" y="1.500" width="6" height="3" fill="#e6e6e6"/><path d="M2 6h5M3 7.500h3" stroke="#e6e6e6" stroke-width=".8"/><circle cx="6.800" cy="6.500" r=".9" fill="#d8c020"/></svg>
<svg style="left:858.800px;top:68.5px" width="9" height="8" viewBox="0 0 9 8"><rect x="2.700" y="1" width="3.600" height="6.500" rx=".6" fill="none" stroke="#e6e6e6" stroke-width="1"/><rect x="3.600" y="4" width="1.800" height="2.600" fill="#e6e6e6"/></svg>
<svg style="left:858.800px;top:85px" width="9" height="8" viewBox="0 0 9 8"><path d="M2.500 1.500a2.800 2.800 0 0 1 4 0M3.500 2.600a1.400 1.400 0 0 1 2 0" fill="none" stroke="#e6e6e6" stroke-width=".7"/><path d="M1 5.500h7v2H1z" fill="#e6e6e6"/></svg>
<svg style="left:858.800px;top:101px" width="9" height="8" viewBox="0 0 9 8"><circle cx="4.500" cy="3.600" r="2.600" fill="none" stroke="#e6e6e6" stroke-width="1.100"/><circle cx="4.500" cy="3.600" r=".9" fill="#e6e6e6"/><path d="M2 7.500h5" stroke="#e6e6e6" stroke-width="1"/></svg>
<svg style="left:858.800px;top:118px" width="9" height="8" viewBox="0 0 9 8"><path d="M1.200 3.500h6.600v4H1.200z" fill="#e6e6e6"/><path d="M1.200 2.500l6-1.700" stroke="#e6e6e6" stroke-width="1"/></svg>
<svg style="left:858.800px;top:134px" width="9" height="8" viewBox="0 0 9 8"><path d="M4.500 .5v7M1 4h7M3.500 1.500l1-1 1 1M3.500 6.500l1 1 1-1M2 3l-1 1 1 1M7 3l1 1-1 1" fill="none" stroke="#e6e6e6" stroke-width=".7"/></svg>
<svg style="left:858.800px;top:150px" width="9" height="8" viewBox="0 0 9 8"><rect x="1" y="1" width="7" height="6" fill="none" stroke="#e6e6e6" stroke-width="1"/><path d="M2.500 3h1.500v2H2.500zM5 3h1.800M5 5h1.800" stroke="#e6e6e6" stroke-width=".7" fill="none"/></svg>
<svg style="left:858.800px;top:166.5px" width="9" height="8" viewBox="0 0 9 8"><circle cx="4" cy="4" r="2.700" fill="#e6e6e6"/><circle cx="4" cy="4" r=".9" fill="#060606"/><path d="M6.500 4h2" stroke="#e6e6e6" stroke-width="1"/></svg>
<svg style="left:858.800px;top:183px" width="9" height="8" viewBox="0 0 9 8"><circle cx="2" cy="6.500" r="1" fill="#e6e6e6"/><path d="M1.200 3.600A3.300 3.300 0 0 1 5 7.300M1.200 1.200A5.800 5.800 0 0 1 7.500 7.300" fill="none" stroke="#e6e6e6" stroke-width="1.100"/></svg>
<svg style="left:858.800px;top:198.5px" width="9" height="8" viewBox="0 0 9 8"><path d="M1 1h7v5H4.500L3 7.500V6H1z" fill="#e6e6e6"/></svg>
<svg style="left:858.800px;top:215px" width="9" height="8" viewBox="0 0 9 8"><path d="M6.500 1 2 4l4.500 3" fill="none" stroke="#4a4a4a" stroke-width=".9"/></svg>
<svg style="left:858.800px;top:231.5px" width="9" height="8" viewBox="0 0 9 8"><path d="M.8 3h1.700l2.300-2v6L2.500 5H.8z" fill="#e6e6e6"/><path d="M5.800 4h2.400M7 2.800v2.400" stroke="#e6e6e6" stroke-width=".8"/></svg>
<svg style="left:858.800px;top:248px" width="9" height="8" viewBox="0 0 9 8"><path d="M.8 3h1.700l2.300-2v6L2.500 5H.8z" fill="#e6e6e6"/><path d="M5.800 4h2.400" stroke="#e6e6e6" stroke-width=".8"/></svg>
<svg style="left:858.800px;top:264.5px" width="9" height="8" viewBox="0 0 9 8"><path d="M4.500 1 7.500 4l-3 3-3-3z" fill="none" stroke="#e6e6e6" stroke-width="1"/><path d="M1.500 1.800a4 4 0 0 1 6 0M7.500 6.200a4 4 0 0 1-6 0" fill="none" stroke="#e6e6e6" stroke-width=".6"/></svg>
<svg style="left:858.800px;top:280px" width="9" height="8" viewBox="0 0 9 8"><path d="M1 2.800V1h1.800M6.200 1H8v1.800M8 5.200V7H6.200M2.800 7H1V5.200M1 1l2.300 2.300M8 1 5.700 3.300M8 7 5.700 4.700M1 7l2.300-2.300" fill="none" stroke="#e6e6e6" stroke-width=".7"/></svg>
<svg style="left:858.500px;top:442px" width="10" height="7" viewBox="0 0 10 7" fill="none" stroke="#ddd" stroke-width=".9"><path d="M2 2h6.500v3H2zM.8 3.500 2.500 2M.8 3.500l1.700 1.500"/></svg>
<div style="left:655.2px;top:48.9px;width:200.1px;height:387.4px;background:#e3effb;"></div>
<div style="left:655.2px;top:48.9px;width:200.1px;height:12.1px;background:#6b98c4;"></div>
<div style="left:662px;top:52.5px;font-size:6.7px;color:#f4f8fc;white-space:nowrap;line-height:1;-webkit-text-stroke:.2px #f4f8fc">1:59</div>
<svg style="left:680.500px;top:51.500px" width="7" height="7" viewBox="0 0 7 7"><circle cx="3.500" cy="3.500" r="2.300" fill="none" stroke="#fff" stroke-width="1.500" stroke-dasharray="1.200 .6"/><circle cx="3.500" cy="3.500" r="1.900" fill="none" stroke="#fff" stroke-width="1"/></svg>
<svg style="left:826px;top:50.500px" width="26" height="9" viewBox="0 0 26 9"><path d="M0 2.500a5.700 5.700 0 0 1 7.800 0l-3.900 4.700z" fill="#fff"/><path d="M10.500 7.200l5.500-5.500v5.500z" fill="#fff"/><rect x="19.500" y="1.300" width="3.200" height="6" rx=".6" fill="#fff"/></svg>
<div style="left:655.2px;top:61px;width:200.1px;height:26.9px;background:#8ec5f8;"></div>
<div style="left:663.7px;top:70px;font-size:9.15px;color:#f1f7fd;white-space:nowrap;line-height:1;font-weight:bold;letter-spacing:-.2px">LIVE&amp;LEARN</div>
<div style="left:826px;top:48.900px;width:29.300px;height:30px;overflow:hidden"><div style="left:-4.150px;top:8.450px;width:44px;height:6.200px;background:#a23a46;transform:rotate(45deg);transform-origin:center;font-size:3.600px;color:#f0d6d8;text-align:center;line-height:6.200px;font-weight:bold;letter-spacing:.1px">DEBUG</div></div>
<svg style="left:794.300px;top:69.800px" width="8.500" height="8.500" viewBox="0 0 10 10"><circle cx="5" cy="2.800" r="2.300" fill="#1a1a1a"/><path d="M.5 9.500v-1.300c0-1.800 3-2.700 4.500-2.700s4.500.9 4.500 2.700v1.300z" fill="#1a1a1a"/></svg>
<div style="left:808px;top:71.3px;font-size:6.6px;color:#1e2a36;white-space:nowrap;line-height:1;"><span class="t" style="width:40.00px">ออกจากระบบ</span></div>
<svg style="left:667px;top:98.500px" width="10" height="11" viewBox="0 0 10 11"><path d="M1.500 1.500h2a1.500 1.500 0 0 1 3 0h2a1 1 0 0 1 1 1v7.500a1 1 0 0 1-1 1h-7a1 1 0 0 1-1-1V2.500a1 1 0 0 1 1-1z" fill="#1c1c1c"/><path d="M2.500 4.500h5M2.500 6.300h5M2.500 8.100h3.500" stroke="#e3effb" stroke-width=".8"/></svg>
<div style="left:682.3px;top:102px;font-size:6.6px;color:#2a2a2a;white-space:nowrap;line-height:1;"><span class="t" style="width:48.00px">ห้องเรียนของคุณ</span></div>
<svg style="left:789px;top:98.500px" width="13" height="11" viewBox="0 0 13 11" fill="none" stroke="#1c1c1c" stroke-width=".9"><circle cx="7.700" cy="5.500" r="4.200"/><path d="M7.700 3.300v4.400M5.500 5.500h4.400M3.300 1.700a4.800 4.800 0 0 0 0 7.600"/></svg>
<div style="left:805.5px;top:102px;font-size:6.4px;color:#1e2a36;white-space:nowrap;line-height:1;"><span class="t" style="width:38.00px">สร้างห้องเรียน</span></div>
<div style="left:808px;top:78px;width:40px;height:0.7px;background:#1e2a36;"></div>
<div style="left:805.5px;top:108.5px;width:38.5px;height:0.7px;background:#1e2a36;"></div>
<div style="left:660px;top:127.7px;width:191px;height:58.3px;background:#ffffff;border-radius:2.500px;box-shadow:0 .5px 1.500px rgba(80,110,140,.45);"></div>
<div style="left:664px;top:135.0px;font-size:8.2px;color:#1c1c1c;white-space:nowrap;line-height:1;"><span class="t" style="width:25.00px">ชื่อห้อง</span>: name</div>
<div style="left:664px;top:146.8px;font-size:6.45px;color:#1c1c1c;white-space:nowrap;line-height:1;letter-spacing:.09px"><span class="t" style="width:40.00px">วันเวลาที่เรียน</span>: 7 <span class="t" style="width:22.55px">เมษายน</span> <span class="t" style="width:4.09px">ค</span>.<span class="t" style="width:4.09px">ศ</span>. 2020 14 <span class="t" style="width:20.45px">นาฬิกา</span> 00 <span class="t" style="width:12.28px">นาที</span> 00 <span class="t" style="width:16.38px">วินาที</span></div>
<div style="left:688.5px;top:168.9px;font-size:6.2px;color:#3e9e4a;white-space:nowrap;line-height:1;"><span class="t" style="width:33.00px">เข้าห้องเรียน</span></div>
<div style="left:743.5px;top:168.9px;font-size:6.2px;color:#9a9a9a;white-space:nowrap;line-height:1;"><span class="t" style="width:39.00px">แก้ไขห้องเรียน</span></div>
<div style="left:804.5px;top:168.9px;font-size:6.2px;color:#e04030;white-space:nowrap;line-height:1;"><span class="t" style="width:32.00px">ลบห้องเรียน</span></div>
<div style="left:660px;top:199.5px;width:191px;height:58.3px;background:#ffffff;border-radius:2.500px;box-shadow:0 .5px 1.500px rgba(80,110,140,.45);"></div>
<div style="left:664px;top:206.8px;font-size:8.2px;color:#1c1c1c;white-space:nowrap;line-height:1;"><span class="t" style="width:25.00px">ชื่อห้อง</span>: name</div>
<div style="left:664px;top:218.6px;font-size:6.45px;color:#1c1c1c;white-space:nowrap;line-height:1;letter-spacing:.09px"><span class="t" style="width:40.00px">วันเวลาที่เรียน</span>: 7 <span class="t" style="width:22.55px">เมษายน</span> <span class="t" style="width:4.09px">ค</span>.<span class="t" style="width:4.09px">ศ</span>. 2020 14 <span class="t" style="width:20.45px">นาฬิกา</span> 00 <span class="t" style="width:12.28px">นาที</span> 00 <span class="t" style="width:16.38px">วินาที</span></div>
<div style="left:688.5px;top:240.7px;font-size:6.2px;color:#3e9e4a;white-space:nowrap;line-height:1;"><span class="t" style="width:33.00px">เข้าห้องเรียน</span></div>
<div style="left:743.5px;top:240.7px;font-size:6.2px;color:#9a9a9a;white-space:nowrap;line-height:1;"><span class="t" style="width:39.00px">แก้ไขห้องเรียน</span></div>
<div style="left:804.5px;top:240.7px;font-size:6.2px;color:#e04030;white-space:nowrap;line-height:1;"><span class="t" style="width:32.00px">ลบห้องเรียน</span></div>
<div style="left:660px;top:271.3px;width:191px;height:58.3px;background:#ffffff;border-radius:2.500px;box-shadow:0 .5px 1.500px rgba(80,110,140,.45);"></div>
<div style="left:664px;top:278.6px;font-size:8.2px;color:#1c1c1c;white-space:nowrap;line-height:1;"><span class="t" style="width:25.00px">ชื่อห้อง</span>: name</div>
<div style="left:664px;top:290.40000000000003px;font-size:6.45px;color:#1c1c1c;white-space:nowrap;line-height:1;letter-spacing:.09px"><span class="t" style="width:40.00px">วันเวลาที่เรียน</span>: 7 <span class="t" style="width:22.55px">เมษายน</span> <span class="t" style="width:4.09px">ค</span>.<span class="t" style="width:4.09px">ศ</span>. 2020 14 <span class="t" style="width:20.45px">นาฬิกา</span> 00 <span class="t" style="width:12.28px">นาที</span> 00 <span class="t" style="width:16.38px">วินาที</span></div>
<div style="left:688.5px;top:312.5px;font-size:6.2px;color:#3e9e4a;white-space:nowrap;line-height:1;"><span class="t" style="width:33.00px">เข้าห้องเรียน</span></div>
<div style="left:743.5px;top:312.5px;font-size:6.2px;color:#9a9a9a;white-space:nowrap;line-height:1;"><span class="t" style="width:39.00px">แก้ไขห้องเรียน</span></div>
<div style="left:804.5px;top:312.5px;font-size:6.2px;color:#e04030;white-space:nowrap;line-height:1;"><span class="t" style="width:32.00px">ลบห้องเรียน</span></div>
<div style="left:766.5px;top:405.5px;width:60px;height:23.5px;background:#2f9df4;border-radius:12px;box-shadow:0 1px 2px rgba(0,0,0,.35);"></div>
<svg style="left:774px;top:412.500px" width="10" height="10" viewBox="0 0 10 10" fill="none" stroke="#fff" stroke-width="1.300"><circle cx="4" cy="4" r="2.800"/><path d="M6 6l3 3"/></svg>
<div style="left:789.5px;top:413.5px;font-size:6.5px;color:#fff;white-space:nowrap;line-height:1;"><span class="t" style="width:16.00px">ค้นหา</span></div>
<div style="left:655.2px;top:436.3px;width:200.1px;height:24.2px;background:#000;"></div>
<div style="left:656.5px;top:447.3px;font-size:12.2px;color:#666666;white-space:nowrap;line-height:1;">free for personal use</div>
<svg style="left:694px;top:445.500px" width="130" height="8" viewBox="0 0 130 8"><path d="M9 1 4 4 9 7z" fill="#9a9a9a"/><circle cx="61" cy="4" r="2.300" fill="#555"/><rect x="113" y="1.500" width="5" height="5" fill="#444"/></svg>
<div style="left:310px;top:409px;width:207px;height:38.5px;background:rgba(62,62,62,.96);"></div>
<div style="left:517px;top:409px;width:208px;height:38.5px;background:rgba(38,38,38,.93);"></div>
<div style="left:360px;top:409px;width:0.8px;height:38.5px;background:#2a2a2a;"></div>
<div style="left:595px;top:409px;width:0.8px;height:38.5px;background:#222;"></div>
<div style="left:324.5px;top:424px;font-size:8px;color:#6a6a6a;white-space:nowrap;line-height:1;letter-spacing:.6px">--:--</div>
<svg style="left:370px;top:418px" width="22" height="20" viewBox="0 0 22 20"><rect x="3" y="5.500" width="11" height="9" rx="1.200" fill="#f0f0f0"/><path d="M14.500 9l4.500-2.800v7.600L14.500 11z" fill="#f0f0f0"/><path d="M3 17 17 2.500" stroke="#3e3e3e" stroke-width="2.600"/><path d="M3 17.500 17.500 2.500" stroke="#f0f0f0" stroke-width="1.100"/></svg>
<svg style="left:409px;top:418px" width="22" height="20" viewBox="0 0 22 20"><rect x="8" y="2.500" width="5" height="9" rx="2.500" fill="#f0f0f0"/><path d="M5.500 9.500a5 5 0 0 0 10 0M10.500 14.500v3" fill="none" stroke="#f0f0f0" stroke-width="1.200"/><path d="M4 17 17 2.500" stroke="#3e3e3e" stroke-width="2.600"/><path d="M4 17.500 17.500 2.500" stroke="#f0f0f0" stroke-width="1.100"/></svg>
<svg style="left:448px;top:419px" width="22" height="18" viewBox="0 0 22 18" fill="none" stroke="#f0f0f0" stroke-width="1.300"><path d="M7 13.500H4a1.500 1.500 0 0 1-1.500-1.500V4A1.500 1.500 0 0 1 4 2.500h13A1.500 1.500 0 0 1 18.500 4v8a1.500 1.500 0 0 1-1.500 1.500h-3M10.500 16V6.500M7 9.500l3.500-3.500L14 9.500"/></svg>
<div style="left:489.6px;top:426.1px;width:3.8px;height:3.8px;background:#f4f4f4;border-radius:50%;"></div>
<div style="left:495.6px;top:426.1px;width:3.8px;height:3.8px;background:#f4f4f4;border-radius:50%;"></div>
<div style="left:501.6px;top:426.1px;width:3.8px;height:3.8px;background:#f4f4f4;border-radius:50%;"></div>
<svg style="left:528px;top:420px" width="18" height="17" viewBox="0 0 18 17" fill="none" stroke="#f0f0f0" stroke-width="1.200"><path d="M3 2.500h11.500a1 1 0 0 1 1 1v7.500a1 1 0 0 1-1 1H13.500v3l-3.500-3H3a1 1 0 0 1-1-1V3.500a1 1 0 0 1 1-1zM5 6h7.500M5 8.500h5"/></svg>
<svg style="left:566px;top:420px" width="18" height="17" viewBox="0 0 18 17" fill="none" stroke="#f0f0f0" stroke-width="1.200"><circle cx="5.500" cy="4.500" r="1.800"/><circle cx="12" cy="4" r="2.300"/><path d="M2.500 8.500h6v4a3 3 0 0 1-6 0zM8.500 8.500h7v4.500a3.500 3.500 0 0 1-7 0z"/></svg>
<div style="left:608.5px;top:416.5px;width:103.5px;height:23.5px;border:1px solid #6a6a6a;border-radius:1.500px;"></div>
<div style="left:622.5px;top:422.8px;font-size:10.6px;color:#ffffff;white-space:nowrap;line-height:1;font-weight:bold;letter-spacing:-.25px">Request control</div>
<div style="left:725px;top:409px;width:38.5px;height:38.5px;background:#a63044;border-radius:0 2px 2px 0;"></div>
<svg style="left:735.500px;top:423.500px" width="17" height="8" viewBox="0 0 17 8"><path d="M.8 5.200C2.500 2.500 5.500 1.200 8.500 1.200s6 1.300 7.700 4l-1.500 2.100-3-1.200V4.200a8 8 0 0 0-6.400 0v1.900l-3 1.200z" fill="#fff"/></svg>
<div style="left:807.6px;top:390.8px;width:113.4px;height:64.7px;background:#1b1a1a;box-shadow:0 0 2px rgba(0,0,0,.8);"></div>
<div style="left:813px;top:396px;font-size:5.4px;color:#f0f0f0;white-space:nowrap;line-height:1;font-weight:bold"><span class="t" style="width:70.00px">แอปพลิเคชันการเรียนการสอน</span>...</div>
<div style="left:893px;top:396.5px;font-size:4.6px;color:#e0e0e0;white-space:nowrap;line-height:1;">32:09</div>
<div style="left:911px;top:399.3px;width:4px;height:0.7px;background:#bbb;"></div>
<div style="left:852px;top:406.5px;width:25px;height:25px;border-radius:50%;overflow:hidden;background:radial-gradient(circle at 22% 40%,#e4eecb 0,#b4cc92 35%,#86a96c 75%,#6f9659 100%)"><div style="left:0;top:0;width:25px;height:25px;filter:blur(0.27px)"><div style="left:7.20px;top:2.27px;width:11.36px;height:16.67px;background:#1d1512;border-radius:5.68px 5.68px 2.27px 2.27px"></div><div style="left:4.17px;top:12.88px;width:17.42px;height:15.15px;background:#15161a;border-radius:6.82px 6.82px 0 0"></div><div style="left:10.00px;top:4.55px;width:5.45px;height:7.20px;background:#e0b093;border-radius:50%"></div><div style="left:11.06px;top:11.36px;width:3.48px;height:3.79px;background:#d9a98c"></div><div style="left:10.76px;top:14.39px;width:4.09px;height:11.36px;background:#c9cad2;clip-path:polygon(0 0,100% 0,80% 100%,20% 100%)"></div></div></div>
<div style="left:835px;top:437px;width:44px;height:15px;background:#3d3d3d;"></div>
<div style="left:879px;top:437px;width:15px;height:15px;background:#b23a4c;"></div>
<svg style="left:835px;top:437px" width="59" height="15" viewBox="0 0 59 15"><rect x="4.500" y="5" width="5" height="4.500" rx=".5" fill="#eee"/><path d="M9.500 7l2-1.500v3.500l-2-1.300z" fill="#eee"/><rect x="21" y="3.800" width="2.200" height="4.500" rx="1.100" fill="#eee"/><path d="M19.800 7.500a2.300 2.300 0 0 0 4.600 0M22.100 9.800v1.400" fill="none" stroke="#eee" stroke-width=".7"/><rect x="33.800" y="4.800" width="5.600" height="4.800" fill="none" stroke="#eee" stroke-width=".8"/><rect x="36" y="7.200" width="2.600" height="1.800" fill="#eee"/><path d="M48.500 8.300c1.300-1.900 5-1.900 6.300 0l-.8.900-1.200-.5v-.8a3.500 3.500 0 0 0-2.300 0v.8l-1.200.5z" fill="#fff"/></svg>
<div style="left:872.5px;top:456.5px;font-size:4.8px;color:#ffe9d8;white-space:nowrap;line-height:1;">android x86</div>
<div style="left:904.5px;top:456.5px;width:5px;height:4px;background:#ffe9d8;border-radius:1.500px;"></div>
<div style="left:916.5px;top:456px;width:4.5px;height:4.5px;background:#ffe9d8;border-radius:2px 2px 0 0;"></div>
<div style="left:50px;top:475px;width:974px;height:70.5px;background:#1c1b1b;"></div>
<div style="left:485.3px;top:475px;width:134.7px;height:70.5px;background:#3d3d3d;"></div>
<div style="left:620px;top:475px;width:135px;height:70.5px;background:#343434;"></div>
<div style="left:755px;top:475px;width:135px;height:70.5px;background:#2f2f2f;"></div>
<div style="left:374px;top:494px;width:32px;height:32px;border-radius:50%;background:#d6e5ea;color:#3b5f6b;text-align:center;line-height:32px;font-size:12.300px;letter-spacing:-.2px;-webkit-text-stroke:.35px #3b5f6b">UM</div>
<div style="left:437.4px;top:494px;width:32px;height:32px;border-radius:50%;background:#edcfd2;color:#8a2b3c;text-align:center;line-height:32px;font-size:12.300px;letter-spacing:-.2px;-webkit-text-stroke:.35px #8a2b3c">KT</div>
<div style="left:670.5px;top:493.5px;width:33.0px;height:33.0px;border-radius:50%;background:#fbe8c4;color:#8f6416;text-align:center;line-height:33.0px;font-size:12.300px;letter-spacing:-.2px;-webkit-text-stroke:.35px #8f6416">YS</div>
<div style="left:536px;top:494px;width:33px;height:33px;border-radius:50%;overflow:hidden;background:linear-gradient(160deg,#8eb4e4 0%,#c9dcf2 40%,#e6eef8 100%)"><div style="left:10px;top:8px;width:13px;height:17px;background:#141a2c;border-radius:5px 6px 4px 5px;transform:rotate(-6deg)"></div><div style="left:17.500px;top:22px;width:3.500px;height:10px;background:#10131f"></div><div style="left:14.500px;top:3px;width:7px;height:8px;background:#1a1820;border-radius:50%"></div><div style="left:16px;top:5.500px;width:4px;height:4.500px;background:#d9b39b;border-radius:50%"></div><div style="left:20.500px;top:21px;width:2.500px;height:5px;background:#d8c2b4"></div></div>
<div style="left:805.5px;top:493.5px;width:33px;height:33px;border-radius:50%;overflow:hidden;background:radial-gradient(circle at 22% 40%,#e4eecb 0,#b4cc92 35%,#86a96c 75%,#6f9659 100%)"><div style="left:0;top:0;width:33px;height:33px;filter:blur(0.35px)"><div style="left:9.50px;top:3.00px;width:15.00px;height:22.00px;background:#1d1512;border-radius:7.50px 7.50px 3.00px 3.00px"></div><div style="left:5.50px;top:17.00px;width:23.00px;height:20.00px;background:#15161a;border-radius:9.00px 9.00px 0 0"></div><div style="left:13.20px;top:6.00px;width:7.20px;height:9.50px;background:#e0b093;border-radius:50%"></div><div style="left:14.60px;top:15.00px;width:4.60px;height:5.00px;background:#d9a98c"></div><div style="left:14.20px;top:19.00px;width:5.40px;height:15.00px;background:#c9cad2;clip-path:polygon(0 0,100% 0,80% 100%,20% 100%)"></div></div></div>
<div style="left:496px;top:534.5px;font-size:8.7px;color:#f4f4f4;white-space:nowrap;line-height:1;font-weight:bold;letter-spacing:-.2px;text-shadow:0 0 1px rgba(0,0,0,.5);">Putthiporn Thanatha...</div>
<div style="left:631px;top:534.5px;font-size:8.7px;color:#f4f4f4;white-space:nowrap;line-height:1;font-weight:bold;letter-spacing:-.2px;text-shadow:0 0 1px rgba(0,0,0,.5);">Yaowarat Sirisathitkul</div>
<div style="left:766px;top:534.5px;font-size:8.7px;color:#f4f4f4;white-space:nowrap;line-height:1;font-weight:bold;letter-spacing:-.2px;text-shadow:0 0 1px rgba(0,0,0,.5);">Thimaporn Phetkaew</div>
<svg style="left:592.5px;top:533px" width="11" height="11" viewBox="0 0 11 11" fill="none" stroke="#e4e4e4" stroke-width=".8"><rect x="4" y="1.200" width="3" height="5" rx="1.500"/><path d="M2.500 5.200a3 3 0 0 0 6 0M5.500 8.200v1.800M1.500 10 9.500 1"/></svg>
<svg style="left:855.5px;top:533px" width="11" height="11" viewBox="0 0 11 11" fill="none" stroke="#e4e4e4" stroke-width=".8"><rect x="4" y="1.200" width="3" height="5" rx="1.500"/><path d="M2.500 5.200a3 3 0 0 0 6 0M5.500 8.200v1.800M1.500 10 9.500 1"/></svg>
<div style="left:889.800px;top:475px;width:134.200px;height:70.500px;overflow:hidden;background:#cfd2d8"><div style="left:0;top:0;width:135px;height:71px;filter:blur(.7px)"><div style="left:0;top:0;width:31px;height:71px;background:linear-gradient(to right,#d6d2d4,#e2dfe1 40%,#d3d0d4 80%,#bdbcc4)"></div><div style="left:31px;top:0;width:3px;height:71px;background:linear-gradient(to right,#8b8d9a,#a9abb6);transform:skewX(-3deg)"></div><div style="left:34px;top:0;width:50px;height:71px;background:linear-gradient(to bottom,#d2d5db,#c6c9d0)"></div><div style="left:82px;top:0;width:53px;height:71px;background:linear-gradient(to right,#a98d68,#c2a47c 25%,#c8ab84 60%,#bfa079)"></div><div style="left:81px;top:3px;width:2.500px;height:50px;background:#3a3324"></div><div style="left:30px;top:53px;width:76px;height:40px;background:#1f1b1a;border-radius:38px 38px 0 0 / 20px 20px 0 0"></div><div style="left:58px;top:46px;width:22px;height:14px;background:#9d735c;border-radius:0 0 11px 11px"></div><div style="left:47px;top:7px;width:40px;height:38px;background:#15110f;border-radius:50% 50% 45% 45%"></div><div style="left:54.500px;top:20px;width:28px;height:35px;background:#ab826a;border-radius:45% 45% 50% 50%"></div><div style="left:50px;top:10px;width:36px;height:17px;background:#15110f;border-radius:50% 50% 40% 60%"></div><div style="left:56px;top:29px;width:12px;height:8.500px;border:1.300px solid #2a2522;border-radius:3px;background:rgba(150,160,150,.35)"></div><div style="left:70.500px;top:28.500px;width:12px;height:8.500px;border:1.300px solid #2a2522;border-radius:3px;background:rgba(150,160,150,.35)"></div><div style="left:64px;top:46.500px;width:10px;height:1.600px;background:#7c4f44;border-radius:1px"></div></div></div>
<div style="left:901px;top:534.8px;font-size:8.7px;color:#ffffff;white-space:nowrap;line-height:1;font-weight:bold;letter-spacing:-.2px;text-shadow:0 0 1px rgba(0,0,0,.5);">Natdanai Jarnpo</div>
<div style="left:0px;top:545.2px;width:1024px;height:30.8px;background:linear-gradient(to right,#1c3b48 0%,#1b3a49 35%,#1b334b 60%,#1a2c4c 100%);"></div>
<div style="left:36px;top:545.2px;width:258px;height:30.8px;background:#ffffff;"></div>
<svg style="left:11.500px;top:553px" width="13" height="13" viewBox="0 0 13 13"><path d="M0 1.900 5.400 1.100v4.900H0zM6.100 1 13 0v6H6.100zM0 6.800h5.400v4.900L0 11zM6.100 6.800H13v6.100l-6.900-1z" fill="#fff"/></svg>
<svg style="left:44px;top:552.500px" width="15" height="16" viewBox="0 0 15 16" fill="none" stroke="#3a3a3a" stroke-width="1.200"><circle cx="8.500" cy="6" r="4.300"/><path d="M5.500 9.300 1 14.500"/></svg>
<div style="left:66.5px;top:555.7px;font-size:10.8px;color:#444444;white-space:nowrap;line-height:1;">Type here to search</div>
<svg style="left:304px;top:553px" width="16" height="14" viewBox="0 0 16 14" fill="none" stroke="#f0f0f0" stroke-width="1"><path d="M1.500 2.500h8v9h-8zM1.500 5h8M1.500 9h8M12.500 1.500v4M12.500 8v4.500"/><rect x="11.800" y="5.800" width="1.400" height="1.400" fill="#f0f0f0" stroke="none"/></svg>
<div style="left:342.5px;top:547.500px;font-size:25px;font-weight:bold;color:#1c7fdc;line-height:1;letter-spacing:-1px">e</div>
<svg style="left:375.7px;top:552px" width="20" height="16" viewBox="0 0 20 16"><path d="M1 2.500h6l1.500 1.500H19v11H1z" fill="#f5c64a"/><path d="M1 6h18v9H1z" fill="#fbd86a"/><path d="M6 9.500h8V15H6z" fill="#3f8fe0"/><path d="M8 11.500h4V15H8z" fill="#f5c64a"/></svg>
<svg style="left:413.4px;top:550.500px" width="18" height="19" viewBox="0 0 18 19"><path d="M5.500 5V3.500a3.500 3.500 0 0 1 7 0V5" fill="none" stroke="#f4f4f4" stroke-width="1.200"/><path d="M1 5h16v12.500H1z" fill="#f4f4f4"/><path d="M5 8h3.500v3.500H5z" fill="#f25022"/><path d="M9.500 8H13v3.500H9.500z" fill="#7fba00"/><path d="M5 12.500h3.500V16H5z" fill="#00a4ef"/><path d="M9.500 12.500H13V16H9.500z" fill="#ffb900"/></svg>
<svg style="left:450.6px;top:552px" width="18" height="18" viewBox="0 0 24 24"><path d="M17.500 1 7 11 3 8 1 9l3.500 3L1 15l2 1 4-3 10.500 10 5.500-2.500V3.500zM17.500 7v10L11 12z" fill="#2a9df4"/></svg>
<div style="left:486.3px;top:551.500px;width:18px;height:18px;background:#4a4a4a;border-radius:1.500px"></div><svg style="left:489.3px;top:553.500px" width="12" height="14" viewBox="0 0 12 14"><path d="M10.500 1.500 2 4.500v3l8.500 2.500v3L2 13" fill="none" stroke="#ff9800" stroke-width="2.200"/></svg>
<div style="left:524.0px;top:551.500px;width:18px;height:18px;border-radius:50%;background:conic-gradient(from 60deg,#fbc116 0 120deg,#3aa757 120deg 240deg,#e94335 240deg 360deg)"></div><div style="left:529.0px;top:556.500px;width:8px;height:8px;border-radius:50%;background:#4c8bf5;border:1.500px solid #fff"></div>
<svg style="left:561.2px;top:552px" width="17" height="17" viewBox="0 0 17 17" fill="none" stroke="#f2f2f2"><circle cx="8.500" cy="8.500" r="3.600" stroke-width="2.200"/><path d="M8.500 1v3M8.500 13v3M1 8.500h3M13 8.500h3M3.200 3.200l2.100 2.100M11.700 11.700l2.100 2.100M3.200 13.800l2.100-2.100M11.700 5.300l2.100-2.100" stroke-width="2"/></svg>
<div style="left:595.9000000000001px;top:552px;width:16px;height:16px;border-radius:50%;background:radial-gradient(circle at 45% 35%,#7fc4f4,#2468c0 65%,#1b4a90)"></div><div style="left:595.9000000000001px;top:560px;width:20px;height:7px;background:linear-gradient(#e9c230,#4fae3a);border-radius:2px;transform:rotate(-12deg)"></div><div style="left:602.9000000000001px;top:557px;border-left:5px solid transparent;border-right:5px solid transparent;border-top:7px solid #3fbf3a;width:0;height:0"></div>
<div style="left:633.6px;top:552px;width:18px;height:17.500px;background:#1fc32a;border-radius:3.500px"></div><div style="left:636.1px;top:555px;width:13px;height:9.500px;background:#fff;border-radius:5px;font-size:4.500px;color:#1fc32a;font-weight:bold;text-align:center;line-height:9.500px">LINE</div>
<div style="left:668.8px;top:552.500px;width:17px;height:12px;border-radius:50%;background:#f2f2f2;border:2px solid #d04848;transform:rotate(-20deg)"></div><div style="left:678.3px;top:562px;width:5px;height:5px;border:1.300px solid #2f9ae8;border-radius:50%"></div><div style="left:683.3px;top:561px;width:5px;height:5px;border:1.300px solid #2f9ae8;border-radius:50%"></div>
<div style="left:699.5px;top:545.5px;width:35.2px;height:30.5px;background:#3e5564;"></div>
<div style="left:713.0px;top:553px;width:14px;height:13px;background:#5b5fc7;border-radius:2px"></div><div style="left:721.5px;top:549.500px;width:6px;height:6px;background:#7b83eb;border-radius:50%"></div><div style="left:707.5px;top:554.500px;width:11.500px;height:11.500px;background:#4b53bc;border-radius:1.500px;color:#fff;font-size:9px;font-weight:bold;line-height:11.500px;text-align:center">T</div><div style="left:718.5px;top:562.500px;width:7.500px;height:7.500px;background:#d42a3c;border-radius:50%"></div>
<div style="left:749.2px;top:552px;width:14.500px;height:17px;background:linear-gradient(#41a5ee 0 25%,#2b7cd3 25% 50%,#185abd 50% 75%,#103f91 75%);border-radius:1.500px"></div><div style="left:743.2px;top:555.500px;width:11px;height:11px;background:#185abd;border-radius:1.200px;color:#fff;font-size:8px;font-weight:bold;line-height:11px;text-align:center">W</div>
<div style="left:371.7px;top:574px;width:29px;height:2px;background:#8ec3ea;"></div>
<div style="left:445.1px;top:574px;width:29px;height:2px;background:#8ec3ea;"></div>
<div style="left:518.5px;top:574px;width:29px;height:2px;background:#8ec3ea;"></div>
<div style="left:555.2px;top:574px;width:29px;height:2px;background:#8ec3ea;"></div>
<div style="left:591.9000000000001px;top:574px;width:29px;height:2px;background:#8ec3ea;"></div>
<div style="left:628.6px;top:574px;width:29px;height:2px;background:#8ec3ea;"></div>
<div style="left:665.3px;top:574px;width:29px;height:2px;background:#8ec3ea;"></div>
<div style="left:699.5px;top:574px;width:35.2px;height:2px;background:#9ccdf0;"></div>
<div style="left:738.7px;top:574px;width:29px;height:2px;background:#8ec3ea;"></div>
<svg style="left:841px;top:552px" width="120" height="20" viewBox="0 0 120 20" fill="none" stroke="#f0f0f0" stroke-width="1.100"><path d="M3 12l4.500-4.500L12 12"/><rect x="25" y="7.500" width="9.500" height="5.500"/><path d="M35 9.500v1.500M21.500 6.500h3v4M22 6v-1.500"/><path d="M39 9h2.200l3-2.500v8l-3-2.500H39z"/><path d="M46 8.200c.9 1.300.9 3.300 0 4.600M48 6.500c1.700 2.300 1.700 5.700 0 8" stroke-width=".9" opacity=".7"/><path d="M58.500 15c0-3.800 3-6.800 6.800-6.800M61.500 15c0-2.100 1.700-3.800 3.800-3.800M55.500 15c0-5.400 4.400-9.800 9.800-9.800" stroke-width="1"/><circle cx="65" cy="14.600" r=".9" fill="#f0f0f0" stroke="none"/></svg>
<div style="left:915.5px;top:556.5px;font-size:8.6px;color:#f4f4f4;white-space:nowrap;line-height:1;"><span class="t" style="width:15.00px">ไทย</span></div>
<div style="left:950.5px;top:548.5px;font-size:9.4px;color:#f6f6f6;white-space:nowrap;line-height:1;letter-spacing:-.2px">12:59</div>
<div style="left:941.5px;top:562.8px;font-size:9.4px;color:#f6f6f6;white-space:nowrap;line-height:1;letter-spacing:-.2px">12/5/2563</div>
<svg style="left:992px;top:551.500px" width="16" height="15" viewBox="0 0 16 15"><path d="M1.500 1.500h13v9.500H6l-3 3v-3H1.500z" fill="#f4f4f4"/><path d="M4 4.500h8M4 6.800h8" stroke="#1a2c4c" stroke-width=".9"/></svg>
<div style="left:999px;top:560.5px;width:10.5px;height:10.5px;background:#202a38;border-radius:50%;border:1px solid #c8c8c8;color:#fff;font-size:7.500px;line-height:8.500px;text-align:center;">3</div>
<div style="left:1017.5px;top:551px;width:1px;height:19px;background:#8a96a6;"></div>
</body></html>
